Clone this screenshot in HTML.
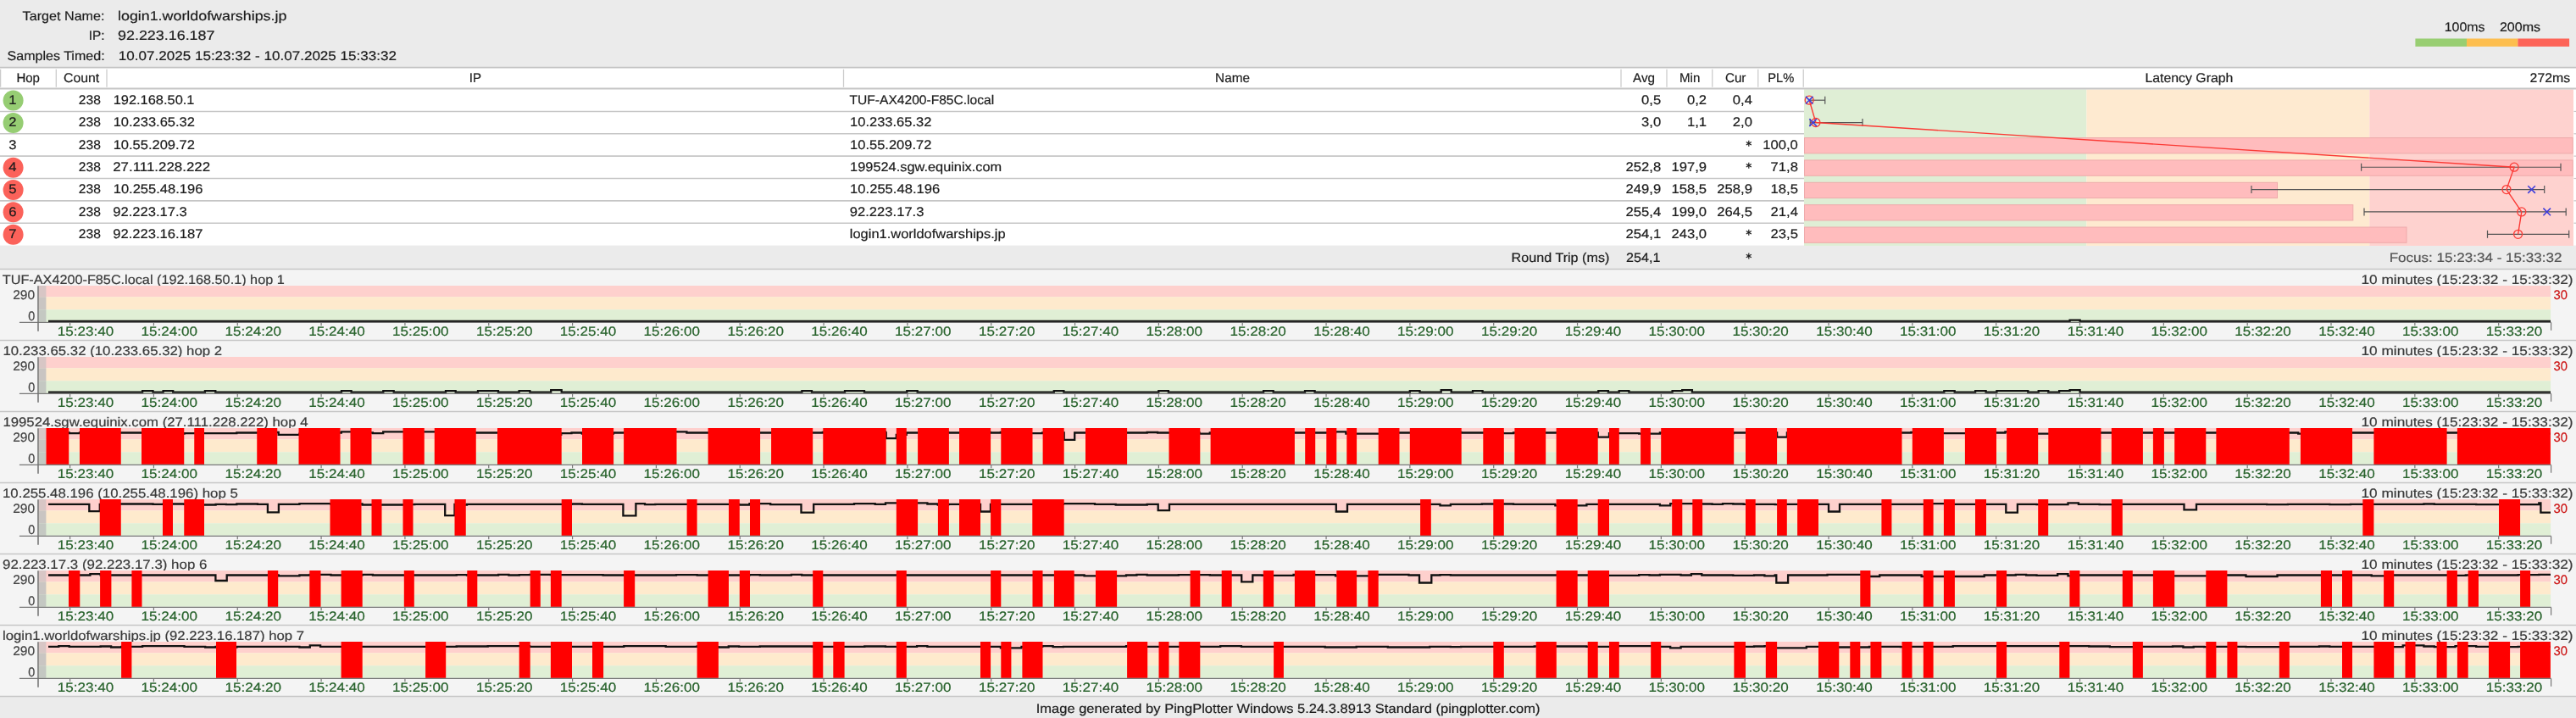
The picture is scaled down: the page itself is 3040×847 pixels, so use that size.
<!DOCTYPE html>
<html><head><meta charset="utf-8"><title>PingPlotter</title>
<style>
html,body{margin:0;padding:0;background:#ebebeb;}
body{width:3040px;height:847px;overflow:hidden;}
svg{display:block;will-change:transform;font-family:"Liberation Sans",sans-serif;}
text{white-space:pre;stroke-width:0.2px;text-rendering:geometricPrecision;}
</style></head><body>
<svg width="3040" height="847" viewBox="0 0 3040 847">
<rect x="0.00" y="0.00" width="3040.00" height="847.00" fill="#ebebeb" />
<text x="26.60" y="24.00" fill="#1c1c1c" stroke="#1c1c1c" font-size="15.3" textLength="96.96" lengthAdjust="spacingAndGlyphs">Target Name:</text>
<text x="104.80" y="47.00" fill="#1c1c1c" stroke="#1c1c1c" font-size="15.3" textLength="18.76" lengthAdjust="spacingAndGlyphs">IP:</text>
<text x="8.60" y="71.00" fill="#1c1c1c" stroke="#1c1c1c" font-size="15.3" textLength="114.99" lengthAdjust="spacingAndGlyphs">Samples Timed:</text>
<text x="139.00" y="24.00" fill="#1c1c1c" stroke="#1c1c1c" font-size="15.6" textLength="199.36" lengthAdjust="spacingAndGlyphs">login1.worldofwarships.jp</text>
<text x="139.00" y="47.00" fill="#1c1c1c" stroke="#1c1c1c" font-size="15.6" textLength="114.50" lengthAdjust="spacingAndGlyphs">92.223.16.187</text>
<text x="139.80" y="71.00" fill="#1c1c1c" stroke="#1c1c1c" font-size="15.3" textLength="328.19" lengthAdjust="spacingAndGlyphs">10.07.2025 15:23:32 - 10.07.2025 15:33:32</text>
<rect x="2850.40" y="45.50" width="60.60" height="9.40" fill="#98ce72" />
<rect x="2911.00" y="45.50" width="60.40" height="9.40" fill="#fdbe4f" />
<rect x="2971.40" y="45.50" width="60.70" height="9.40" fill="#fd6458" />
<text x="2884.70" y="37.00" fill="#1c1c1c" stroke="#1c1c1c" font-size="15.3" textLength="47.92" lengthAdjust="spacingAndGlyphs">100ms</text>
<text x="2949.90" y="37.00" fill="#1c1c1c" stroke="#1c1c1c" font-size="15.3" textLength="48.23" lengthAdjust="spacingAndGlyphs">200ms</text>
<rect x="0.00" y="80.00" width="3040.00" height="209.55" fill="#ffffff" />
<rect x="2129.00" y="105.40" width="333.40" height="184.55" fill="#dfeed5" />
<rect x="2462.40" y="105.40" width="333.90" height="184.55" fill="#feead0" />
<rect x="2796.30" y="105.40" width="240.70" height="184.55" fill="#fed2cf" />
<line x1="0.00" y1="79.60" x2="3040.00" y2="79.60" stroke="#c2c2c2" stroke-width="1.6" />
<line x1="0.00" y1="104.50" x2="3040.00" y2="104.50" stroke="#c6c6c6" stroke-width="1.8" />
<line x1="0.00" y1="131.45" x2="2129.00" y2="131.45" stroke="#c6c6c6" stroke-width="1.6" />
<line x1="3037.50" y1="131.45" x2="3040.00" y2="131.45" stroke="#c6c6c6" stroke-width="1.2" />
<line x1="0.00" y1="157.80" x2="2129.00" y2="157.80" stroke="#c6c6c6" stroke-width="1.6" />
<line x1="3037.50" y1="157.80" x2="3040.00" y2="157.80" stroke="#c6c6c6" stroke-width="1.2" />
<line x1="0.00" y1="184.15" x2="2129.00" y2="184.15" stroke="#c6c6c6" stroke-width="1.6" />
<line x1="3037.50" y1="184.15" x2="3040.00" y2="184.15" stroke="#c6c6c6" stroke-width="1.2" />
<line x1="0.00" y1="210.50" x2="2129.00" y2="210.50" stroke="#c6c6c6" stroke-width="1.6" />
<line x1="3037.50" y1="210.50" x2="3040.00" y2="210.50" stroke="#c6c6c6" stroke-width="1.2" />
<line x1="0.00" y1="236.85" x2="2129.00" y2="236.85" stroke="#c6c6c6" stroke-width="1.6" />
<line x1="3037.50" y1="236.85" x2="3040.00" y2="236.85" stroke="#c6c6c6" stroke-width="1.2" />
<line x1="0.00" y1="263.20" x2="2129.00" y2="263.20" stroke="#c6c6c6" stroke-width="1.6" />
<line x1="3037.50" y1="263.20" x2="3040.00" y2="263.20" stroke="#c6c6c6" stroke-width="1.2" />
<line x1="0.60" y1="81.80" x2="0.60" y2="102.80" stroke="#cccccc" stroke-width="1.3" />
<line x1="66.30" y1="81.80" x2="66.30" y2="102.80" stroke="#cccccc" stroke-width="1.3" />
<line x1="126.00" y1="81.80" x2="126.00" y2="102.80" stroke="#cccccc" stroke-width="1.3" />
<line x1="995.50" y1="81.80" x2="995.50" y2="102.80" stroke="#cccccc" stroke-width="1.3" />
<line x1="1913.00" y1="81.80" x2="1913.00" y2="102.80" stroke="#cccccc" stroke-width="1.3" />
<line x1="1967.00" y1="81.80" x2="1967.00" y2="102.80" stroke="#cccccc" stroke-width="1.3" />
<line x1="2020.75" y1="81.80" x2="2020.75" y2="102.80" stroke="#cccccc" stroke-width="1.3" />
<line x1="2074.75" y1="81.80" x2="2074.75" y2="102.80" stroke="#cccccc" stroke-width="1.3" />
<line x1="2128.25" y1="81.80" x2="2128.25" y2="102.80" stroke="#cccccc" stroke-width="1.3" />
<text x="19.40" y="97.00" fill="#1c1c1c" stroke="#1c1c1c" font-size="15.3" textLength="27.49" lengthAdjust="spacingAndGlyphs">Hop</text>
<text x="75.00" y="97.00" fill="#1c1c1c" stroke="#1c1c1c" font-size="15.3" textLength="42.23" lengthAdjust="spacingAndGlyphs">Count</text>
<text x="553.80" y="97.00" fill="#1c1c1c" stroke="#1c1c1c" font-size="15.3" textLength="14.20" lengthAdjust="spacingAndGlyphs">IP</text>
<text x="1434.10" y="97.00" fill="#1c1c1c" stroke="#1c1c1c" font-size="15.3" textLength="40.86" lengthAdjust="spacingAndGlyphs">Name</text>
<text x="1927.10" y="97.00" fill="#1c1c1c" stroke="#1c1c1c" font-size="15.3" textLength="26.00" lengthAdjust="spacingAndGlyphs">Avg</text>
<text x="1982.00" y="97.00" fill="#1c1c1c" stroke="#1c1c1c" font-size="15.3" textLength="24.32" lengthAdjust="spacingAndGlyphs">Min</text>
<text x="2035.90" y="97.00" fill="#1c1c1c" stroke="#1c1c1c" font-size="15.3" textLength="24.52" lengthAdjust="spacingAndGlyphs">Cur</text>
<text x="2086.30" y="97.00" fill="#1c1c1c" stroke="#1c1c1c" font-size="15.3" textLength="31.03" lengthAdjust="spacingAndGlyphs">PL%</text>
<text x="2531.40" y="97.00" fill="#1c1c1c" stroke="#1c1c1c" font-size="15.3" textLength="104.00" lengthAdjust="spacingAndGlyphs">Latency Graph</text>
<text x="2985.60" y="97.00" fill="#1c1c1c" stroke="#1c1c1c" font-size="15.3" textLength="47.62" lengthAdjust="spacingAndGlyphs">272ms</text>
<circle cx="15.6" cy="118.60" r="12.0" fill="#96cd73"/>
<text x="10.38" y="123.00" fill="#1c1c1c" stroke="#1c1c1c" font-size="15.3" textLength="9.26" lengthAdjust="spacingAndGlyphs">1</text>
<text x="92.80" y="123.00" fill="#1c1c1c" stroke="#1c1c1c" font-size="15.3" textLength="26.08" lengthAdjust="spacingAndGlyphs">238</text>
<text x="133.70" y="123.00" fill="#1c1c1c" stroke="#1c1c1c" font-size="15.3" textLength="95.78" lengthAdjust="spacingAndGlyphs">192.168.50.1</text>
<text x="1002.50" y="123.00" fill="#1c1c1c" stroke="#1c1c1c" font-size="15.3" textLength="170.68" lengthAdjust="spacingAndGlyphs">TUF-AX4200-F85C.local</text>
<text x="1937.07" y="123.00" fill="#1c1c1c" stroke="#1c1c1c" font-size="15.3" textLength="23.14" lengthAdjust="spacingAndGlyphs">0,5</text>
<text x="1990.97" y="123.00" fill="#1c1c1c" stroke="#1c1c1c" font-size="15.3" textLength="23.14" lengthAdjust="spacingAndGlyphs">0,2</text>
<text x="2044.87" y="123.00" fill="#1c1c1c" stroke="#1c1c1c" font-size="15.3" textLength="23.14" lengthAdjust="spacingAndGlyphs">0,4</text>
<circle cx="15.6" cy="144.95" r="12.0" fill="#96cd73"/>
<text x="10.38" y="149.00" fill="#1c1c1c" stroke="#1c1c1c" font-size="15.3" textLength="9.26" lengthAdjust="spacingAndGlyphs">2</text>
<text x="92.80" y="149.00" fill="#1c1c1c" stroke="#1c1c1c" font-size="15.3" textLength="26.08" lengthAdjust="spacingAndGlyphs">238</text>
<text x="133.70" y="149.00" fill="#1c1c1c" stroke="#1c1c1c" font-size="15.3" textLength="96.28" lengthAdjust="spacingAndGlyphs">10.233.65.32</text>
<text x="1003.00" y="149.00" fill="#1c1c1c" stroke="#1c1c1c" font-size="15.3" textLength="96.48" lengthAdjust="spacingAndGlyphs">10.233.65.32</text>
<text x="1937.07" y="149.00" fill="#1c1c1c" stroke="#1c1c1c" font-size="15.3" textLength="23.14" lengthAdjust="spacingAndGlyphs">3,0</text>
<text x="1990.97" y="149.00" fill="#1c1c1c" stroke="#1c1c1c" font-size="15.3" textLength="23.14" lengthAdjust="spacingAndGlyphs">1,1</text>
<text x="2044.87" y="149.00" fill="#1c1c1c" stroke="#1c1c1c" font-size="15.3" textLength="23.14" lengthAdjust="spacingAndGlyphs">2,0</text>
<text x="10.38" y="176.00" fill="#1c1c1c" stroke="#1c1c1c" font-size="15.3" textLength="9.26" lengthAdjust="spacingAndGlyphs">3</text>
<text x="92.80" y="176.00" fill="#1c1c1c" stroke="#1c1c1c" font-size="15.3" textLength="26.08" lengthAdjust="spacingAndGlyphs">238</text>
<text x="133.70" y="176.00" fill="#1c1c1c" stroke="#1c1c1c" font-size="15.3" textLength="96.28" lengthAdjust="spacingAndGlyphs">10.55.209.72</text>
<text x="1003.00" y="176.00" fill="#1c1c1c" stroke="#1c1c1c" font-size="15.3" textLength="96.48" lengthAdjust="spacingAndGlyphs">10.55.209.72</text>
<line x1="2063.80" y1="165.80" x2="2063.80" y2="172.80" stroke="#1c1c1c" stroke-width="1.15" />
<line x1="2060.77" y1="167.55" x2="2066.83" y2="171.05" stroke="#1c1c1c" stroke-width="1.15" />
<line x1="2066.83" y1="167.55" x2="2060.77" y2="171.05" stroke="#1c1c1c" stroke-width="1.15" />
<text x="2080.21" y="176.00" fill="#1c1c1c" stroke="#1c1c1c" font-size="15.3" textLength="41.64" lengthAdjust="spacingAndGlyphs">100,0</text>
<circle cx="15.6" cy="197.65" r="12.0" fill="#fb625a"/>
<text x="10.38" y="202.00" fill="#1c1c1c" stroke="#1c1c1c" font-size="15.3" textLength="9.26" lengthAdjust="spacingAndGlyphs">4</text>
<text x="92.80" y="202.00" fill="#1c1c1c" stroke="#1c1c1c" font-size="15.3" textLength="26.08" lengthAdjust="spacingAndGlyphs">238</text>
<text x="133.20" y="202.00" fill="#1c1c1c" stroke="#1c1c1c" font-size="15.3" textLength="114.96" lengthAdjust="spacingAndGlyphs">27.111.228.222</text>
<text x="1003.10" y="202.00" fill="#1c1c1c" stroke="#1c1c1c" font-size="15.3" textLength="179.13" lengthAdjust="spacingAndGlyphs">199524.sgw.equinix.com</text>
<text x="1918.51" y="202.00" fill="#1c1c1c" stroke="#1c1c1c" font-size="15.3" textLength="41.64" lengthAdjust="spacingAndGlyphs">252,8</text>
<text x="1972.41" y="202.00" fill="#1c1c1c" stroke="#1c1c1c" font-size="15.3" textLength="41.64" lengthAdjust="spacingAndGlyphs">197,9</text>
<line x1="2063.80" y1="191.80" x2="2063.80" y2="198.80" stroke="#1c1c1c" stroke-width="1.15" />
<line x1="2060.77" y1="193.55" x2="2066.83" y2="197.05" stroke="#1c1c1c" stroke-width="1.15" />
<line x1="2066.83" y1="193.55" x2="2060.77" y2="197.05" stroke="#1c1c1c" stroke-width="1.15" />
<text x="2089.53" y="202.00" fill="#1c1c1c" stroke="#1c1c1c" font-size="15.3" textLength="32.40" lengthAdjust="spacingAndGlyphs">71,8</text>
<circle cx="15.6" cy="224.00" r="12.0" fill="#fb625a"/>
<text x="10.38" y="228.00" fill="#1c1c1c" stroke="#1c1c1c" font-size="15.3" textLength="9.26" lengthAdjust="spacingAndGlyphs">5</text>
<text x="92.80" y="228.00" fill="#1c1c1c" stroke="#1c1c1c" font-size="15.3" textLength="26.08" lengthAdjust="spacingAndGlyphs">238</text>
<text x="133.70" y="228.00" fill="#1c1c1c" stroke="#1c1c1c" font-size="15.3" textLength="105.70" lengthAdjust="spacingAndGlyphs">10.255.48.196</text>
<text x="1003.10" y="228.00" fill="#1c1c1c" stroke="#1c1c1c" font-size="15.3" textLength="106.10" lengthAdjust="spacingAndGlyphs">10.255.48.196</text>
<text x="1918.51" y="228.00" fill="#1c1c1c" stroke="#1c1c1c" font-size="15.3" textLength="41.64" lengthAdjust="spacingAndGlyphs">249,9</text>
<text x="1972.41" y="228.00" fill="#1c1c1c" stroke="#1c1c1c" font-size="15.3" textLength="41.64" lengthAdjust="spacingAndGlyphs">158,5</text>
<text x="2026.31" y="228.00" fill="#1c1c1c" stroke="#1c1c1c" font-size="15.3" textLength="41.64" lengthAdjust="spacingAndGlyphs">258,9</text>
<text x="2089.53" y="228.00" fill="#1c1c1c" stroke="#1c1c1c" font-size="15.3" textLength="32.40" lengthAdjust="spacingAndGlyphs">18,5</text>
<circle cx="15.6" cy="250.35" r="12.0" fill="#fb625a"/>
<text x="10.38" y="255.00" fill="#1c1c1c" stroke="#1c1c1c" font-size="15.3" textLength="9.26" lengthAdjust="spacingAndGlyphs">6</text>
<text x="92.80" y="255.00" fill="#1c1c1c" stroke="#1c1c1c" font-size="15.3" textLength="26.08" lengthAdjust="spacingAndGlyphs">238</text>
<text x="133.20" y="255.00" fill="#1c1c1c" stroke="#1c1c1c" font-size="15.3" textLength="87.66" lengthAdjust="spacingAndGlyphs">92.223.17.3</text>
<text x="1002.80" y="255.00" fill="#1c1c1c" stroke="#1c1c1c" font-size="15.3" textLength="87.66" lengthAdjust="spacingAndGlyphs">92.223.17.3</text>
<text x="1918.51" y="255.00" fill="#1c1c1c" stroke="#1c1c1c" font-size="15.3" textLength="41.64" lengthAdjust="spacingAndGlyphs">255,4</text>
<text x="1972.41" y="255.00" fill="#1c1c1c" stroke="#1c1c1c" font-size="15.3" textLength="41.64" lengthAdjust="spacingAndGlyphs">199,0</text>
<text x="2026.31" y="255.00" fill="#1c1c1c" stroke="#1c1c1c" font-size="15.3" textLength="41.64" lengthAdjust="spacingAndGlyphs">264,5</text>
<text x="2089.53" y="255.00" fill="#1c1c1c" stroke="#1c1c1c" font-size="15.3" textLength="32.40" lengthAdjust="spacingAndGlyphs">21,4</text>
<circle cx="15.6" cy="276.70" r="12.0" fill="#fb625a"/>
<text x="10.38" y="281.00" fill="#1c1c1c" stroke="#1c1c1c" font-size="15.3" textLength="9.26" lengthAdjust="spacingAndGlyphs">7</text>
<text x="92.80" y="281.00" fill="#1c1c1c" stroke="#1c1c1c" font-size="15.3" textLength="26.08" lengthAdjust="spacingAndGlyphs">238</text>
<text x="133.20" y="281.00" fill="#1c1c1c" stroke="#1c1c1c" font-size="15.3" textLength="106.20" lengthAdjust="spacingAndGlyphs">92.223.16.187</text>
<text x="1002.80" y="281.00" fill="#1c1c1c" stroke="#1c1c1c" font-size="15.3" textLength="183.76" lengthAdjust="spacingAndGlyphs">login1.worldofwarships.jp</text>
<text x="1918.51" y="281.00" fill="#1c1c1c" stroke="#1c1c1c" font-size="15.3" textLength="41.64" lengthAdjust="spacingAndGlyphs">254,1</text>
<text x="1972.41" y="281.00" fill="#1c1c1c" stroke="#1c1c1c" font-size="15.3" textLength="41.64" lengthAdjust="spacingAndGlyphs">243,0</text>
<line x1="2063.80" y1="270.80" x2="2063.80" y2="277.80" stroke="#1c1c1c" stroke-width="1.15" />
<line x1="2060.77" y1="272.55" x2="2066.83" y2="276.05" stroke="#1c1c1c" stroke-width="1.15" />
<line x1="2066.83" y1="272.55" x2="2060.77" y2="276.05" stroke="#1c1c1c" stroke-width="1.15" />
<text x="2089.53" y="281.00" fill="#1c1c1c" stroke="#1c1c1c" font-size="15.3" textLength="32.40" lengthAdjust="spacingAndGlyphs">23,5</text>
<rect x="2129.50" y="162.60" width="906.60" height="18.3" fill="#ffbcbd" stroke="#eeaaab" stroke-width="1"/>
<rect x="2129.50" y="188.95" width="906.60" height="18.3" fill="#ffbcbd" stroke="#eeaaab" stroke-width="1"/>
<rect x="2129.50" y="215.30" width="558.00" height="18.3" fill="#ffbcbd" stroke="#eeaaab" stroke-width="1"/>
<rect x="2129.50" y="241.65" width="647.30" height="18.3" fill="#ffbcbd" stroke="#eeaaab" stroke-width="1"/>
<rect x="2129.50" y="268.00" width="710.50" height="18.3" fill="#ffbcbd" stroke="#eeaaab" stroke-width="1"/>
<line x1="2135.00" y1="118.20" x2="2153.75" y2="118.20" stroke="#555555" stroke-width="1.2" />
<line x1="2153.75" y1="113.70" x2="2153.75" y2="122.70" stroke="#555555" stroke-width="1.2" />
<line x1="2136.25" y1="144.55" x2="2198.00" y2="144.55" stroke="#555555" stroke-width="1.2" />
<line x1="2136.25" y1="140.05" x2="2136.25" y2="149.05" stroke="#555555" stroke-width="1.2" />
<line x1="2198.00" y1="140.05" x2="2198.00" y2="149.05" stroke="#555555" stroke-width="1.2" />
<line x1="2786.60" y1="197.25" x2="3022.00" y2="197.25" stroke="#555555" stroke-width="1.2" />
<line x1="2786.60" y1="192.75" x2="2786.60" y2="201.75" stroke="#555555" stroke-width="1.2" />
<line x1="3022.00" y1="192.75" x2="3022.00" y2="201.75" stroke="#555555" stroke-width="1.2" />
<line x1="2657.00" y1="223.60" x2="3002.70" y2="223.60" stroke="#555555" stroke-width="1.2" />
<line x1="2657.00" y1="219.10" x2="2657.00" y2="228.10" stroke="#555555" stroke-width="1.2" />
<line x1="3002.70" y1="219.10" x2="3002.70" y2="228.10" stroke="#555555" stroke-width="1.2" />
<line x1="2790.00" y1="249.95" x2="3028.20" y2="249.95" stroke="#555555" stroke-width="1.2" />
<line x1="2790.00" y1="245.45" x2="2790.00" y2="254.45" stroke="#555555" stroke-width="1.2" />
<line x1="3028.20" y1="245.45" x2="3028.20" y2="254.45" stroke="#555555" stroke-width="1.2" />
<line x1="2935.50" y1="276.30" x2="3031.70" y2="276.30" stroke="#555555" stroke-width="1.2" />
<line x1="2935.50" y1="271.80" x2="2935.50" y2="280.80" stroke="#555555" stroke-width="1.2" />
<line x1="3031.70" y1="271.80" x2="3031.70" y2="280.80" stroke="#555555" stroke-width="1.2" />
<polyline points="2135.2,118.2 2142.9,144.5 2967.1,197.2 2958.0,223.6 2975.8,249.9 2971.6,276.3" fill="none" stroke="#fb3a35" stroke-width="1.4"/>
<circle cx="2135.2" cy="118.2" r="5" fill="none" stroke="#fb3a35" stroke-width="1.3"/>
<circle cx="2142.9" cy="144.5" r="5" fill="none" stroke="#fb3a35" stroke-width="1.3"/>
<circle cx="2967.1" cy="197.2" r="5" fill="none" stroke="#fb3a35" stroke-width="1.3"/>
<circle cx="2958.0" cy="223.6" r="5" fill="none" stroke="#fb3a35" stroke-width="1.3"/>
<circle cx="2975.8" cy="249.9" r="5" fill="none" stroke="#fb3a35" stroke-width="1.3"/>
<circle cx="2971.6" cy="276.3" r="5" fill="none" stroke="#fb3a35" stroke-width="1.3"/>
<line x1="2130.90" y1="113.90" x2="2139.50" y2="122.50" stroke="#3b3bdc" stroke-width="1.5" />
<line x1="2130.90" y1="122.50" x2="2139.50" y2="113.90" stroke="#3b3bdc" stroke-width="1.5" />
<line x1="2135.30" y1="140.25" x2="2143.90" y2="148.85" stroke="#3b3bdc" stroke-width="1.5" />
<line x1="2135.30" y1="148.85" x2="2143.90" y2="140.25" stroke="#3b3bdc" stroke-width="1.5" />
<line x1="2983.30" y1="219.30" x2="2991.90" y2="227.90" stroke="#3b3bdc" stroke-width="1.5" />
<line x1="2983.30" y1="227.90" x2="2991.90" y2="219.30" stroke="#3b3bdc" stroke-width="1.5" />
<line x1="3001.40" y1="245.65" x2="3010.00" y2="254.25" stroke="#3b3bdc" stroke-width="1.5" />
<line x1="3001.40" y1="254.25" x2="3010.00" y2="245.65" stroke="#3b3bdc" stroke-width="1.5" />
<text x="1783.60" y="309.00" fill="#1c1c1c" stroke="#1c1c1c" font-size="15.3" textLength="115.78" lengthAdjust="spacingAndGlyphs">Round Trip (ms)</text>
<text x="1919.00" y="309.00" fill="#1c1c1c" stroke="#1c1c1c" font-size="15.3" textLength="40.36" lengthAdjust="spacingAndGlyphs">254,1</text>
<line x1="2063.80" y1="298.50" x2="2063.80" y2="305.50" stroke="#1c1c1c" stroke-width="1.15" />
<line x1="2060.77" y1="300.25" x2="2066.83" y2="303.75" stroke="#1c1c1c" stroke-width="1.15" />
<line x1="2066.83" y1="300.25" x2="2060.77" y2="303.75" stroke="#1c1c1c" stroke-width="1.15" />
<text x="2819.70" y="309.00" fill="#555555" stroke="#555555" font-size="15.3" textLength="203.76" lengthAdjust="spacingAndGlyphs">Focus: 15:23:34 - 15:33:32</text>
<rect x="0.00" y="317.50" width="3040.00" height="504.00" fill="#f4f4f4" />
<line x1="0.00" y1="317.50" x2="3040.00" y2="317.50" stroke="#c6c6c6" stroke-width="1.3" />
<text x="2.80" y="335.00" fill="#3a3a3a" stroke="#3a3a3a" font-size="15.3" textLength="332.93" lengthAdjust="spacingAndGlyphs">TUF-AX4200-F85C.local (192.168.50.1) hop 1</text>
<text x="2786.50" y="335.00" fill="#3a3a3a" stroke="#3a3a3a" font-size="15.3" textLength="250.09" lengthAdjust="spacingAndGlyphs">10 minutes (15:23:32 - 15:33:32)</text>
<rect x="45.60" y="337.00" width="2964.50" height="13.30" fill="#fed0cd" />
<rect x="45.60" y="350.30" width="2964.50" height="15.00" fill="#feeacd" />
<rect x="45.60" y="365.30" width="2964.50" height="14.40" fill="#e0efd5" />
<rect x="45.80" y="337.00" width="8.60" height="13.30" fill="#d8c6c5" />
<rect x="45.80" y="350.30" width="8.60" height="15.00" fill="#c9c5c2" />
<rect x="45.80" y="365.30" width="8.60" height="14.40" fill="#c4c8c2" />
<text x="15.20" y="353.00" fill="#444444" stroke="#444444" font-size="15.3" textLength="25.98" lengthAdjust="spacingAndGlyphs">290</text>
<text x="33.20" y="378.00" fill="#444444" stroke="#444444" font-size="15.3" textLength="8.02" lengthAdjust="spacingAndGlyphs">0</text>
<text x="3013.60" y="353.00" fill="#cc1414" stroke="#cc1414" font-size="15.3" textLength="16.43" lengthAdjust="spacingAndGlyphs">30</text>
<polyline points="57.0,378.9 2442.6,378.9 2442.6,377.6 2454.6,377.6 2454.6,378.9 3010.0,378.9" fill="none" stroke="#111111" stroke-width="2.3"/>
<line x1="22.90" y1="380.40" x2="3010.70" y2="380.40" stroke="#777777" stroke-width="1.4" />
<line x1="45.00" y1="337.30" x2="45.00" y2="390.80" stroke="#707070" stroke-width="1.5" />
<line x1="3010.60" y1="380.40" x2="3010.60" y2="389.80" stroke="#777777" stroke-width="1.2" />
<line x1="82.60" y1="380.40" x2="82.60" y2="384.30" stroke="#777777" stroke-width="1.2" />
<text x="67.80" y="396.00" fill="#27622b" stroke="#27622b" stroke-width="0.1" font-size="15.3" textLength="66.46" lengthAdjust="spacingAndGlyphs">15:23:40</text>
<line x1="181.43" y1="380.40" x2="181.43" y2="384.30" stroke="#777777" stroke-width="1.2" />
<text x="166.63" y="396.00" fill="#27622b" stroke="#27622b" stroke-width="0.1" font-size="15.3" textLength="66.46" lengthAdjust="spacingAndGlyphs">15:24:00</text>
<line x1="280.26" y1="380.40" x2="280.26" y2="384.30" stroke="#777777" stroke-width="1.2" />
<text x="265.46" y="396.00" fill="#27622b" stroke="#27622b" stroke-width="0.1" font-size="15.3" textLength="66.46" lengthAdjust="spacingAndGlyphs">15:24:20</text>
<line x1="379.09" y1="380.40" x2="379.09" y2="384.30" stroke="#777777" stroke-width="1.2" />
<text x="364.29" y="396.00" fill="#27622b" stroke="#27622b" stroke-width="0.1" font-size="15.3" textLength="66.46" lengthAdjust="spacingAndGlyphs">15:24:40</text>
<line x1="477.92" y1="380.40" x2="477.92" y2="384.30" stroke="#777777" stroke-width="1.2" />
<text x="463.12" y="396.00" fill="#27622b" stroke="#27622b" stroke-width="0.1" font-size="15.3" textLength="66.46" lengthAdjust="spacingAndGlyphs">15:25:00</text>
<line x1="576.75" y1="380.40" x2="576.75" y2="384.30" stroke="#777777" stroke-width="1.2" />
<text x="561.95" y="396.00" fill="#27622b" stroke="#27622b" stroke-width="0.1" font-size="15.3" textLength="66.46" lengthAdjust="spacingAndGlyphs">15:25:20</text>
<line x1="675.58" y1="380.40" x2="675.58" y2="384.30" stroke="#777777" stroke-width="1.2" />
<text x="660.78" y="396.00" fill="#27622b" stroke="#27622b" stroke-width="0.1" font-size="15.3" textLength="66.46" lengthAdjust="spacingAndGlyphs">15:25:40</text>
<line x1="774.41" y1="380.40" x2="774.41" y2="384.30" stroke="#777777" stroke-width="1.2" />
<text x="759.61" y="396.00" fill="#27622b" stroke="#27622b" stroke-width="0.1" font-size="15.3" textLength="66.46" lengthAdjust="spacingAndGlyphs">15:26:00</text>
<line x1="873.24" y1="380.40" x2="873.24" y2="384.30" stroke="#777777" stroke-width="1.2" />
<text x="858.44" y="396.00" fill="#27622b" stroke="#27622b" stroke-width="0.1" font-size="15.3" textLength="66.46" lengthAdjust="spacingAndGlyphs">15:26:20</text>
<line x1="972.07" y1="380.40" x2="972.07" y2="384.30" stroke="#777777" stroke-width="1.2" />
<text x="957.27" y="396.00" fill="#27622b" stroke="#27622b" stroke-width="0.1" font-size="15.3" textLength="66.46" lengthAdjust="spacingAndGlyphs">15:26:40</text>
<line x1="1070.90" y1="380.40" x2="1070.90" y2="384.30" stroke="#777777" stroke-width="1.2" />
<text x="1056.10" y="396.00" fill="#27622b" stroke="#27622b" stroke-width="0.1" font-size="15.3" textLength="66.46" lengthAdjust="spacingAndGlyphs">15:27:00</text>
<line x1="1169.73" y1="380.40" x2="1169.73" y2="384.30" stroke="#777777" stroke-width="1.2" />
<text x="1154.93" y="396.00" fill="#27622b" stroke="#27622b" stroke-width="0.1" font-size="15.3" textLength="66.46" lengthAdjust="spacingAndGlyphs">15:27:20</text>
<line x1="1268.56" y1="380.40" x2="1268.56" y2="384.30" stroke="#777777" stroke-width="1.2" />
<text x="1253.76" y="396.00" fill="#27622b" stroke="#27622b" stroke-width="0.1" font-size="15.3" textLength="66.46" lengthAdjust="spacingAndGlyphs">15:27:40</text>
<line x1="1367.39" y1="380.40" x2="1367.39" y2="384.30" stroke="#777777" stroke-width="1.2" />
<text x="1352.59" y="396.00" fill="#27622b" stroke="#27622b" stroke-width="0.1" font-size="15.3" textLength="66.46" lengthAdjust="spacingAndGlyphs">15:28:00</text>
<line x1="1466.22" y1="380.40" x2="1466.22" y2="384.30" stroke="#777777" stroke-width="1.2" />
<text x="1451.42" y="396.00" fill="#27622b" stroke="#27622b" stroke-width="0.1" font-size="15.3" textLength="66.46" lengthAdjust="spacingAndGlyphs">15:28:20</text>
<line x1="1565.05" y1="380.40" x2="1565.05" y2="384.30" stroke="#777777" stroke-width="1.2" />
<text x="1550.25" y="396.00" fill="#27622b" stroke="#27622b" stroke-width="0.1" font-size="15.3" textLength="66.46" lengthAdjust="spacingAndGlyphs">15:28:40</text>
<line x1="1663.88" y1="380.40" x2="1663.88" y2="384.30" stroke="#777777" stroke-width="1.2" />
<text x="1649.08" y="396.00" fill="#27622b" stroke="#27622b" stroke-width="0.1" font-size="15.3" textLength="66.46" lengthAdjust="spacingAndGlyphs">15:29:00</text>
<line x1="1762.71" y1="380.40" x2="1762.71" y2="384.30" stroke="#777777" stroke-width="1.2" />
<text x="1747.91" y="396.00" fill="#27622b" stroke="#27622b" stroke-width="0.1" font-size="15.3" textLength="66.46" lengthAdjust="spacingAndGlyphs">15:29:20</text>
<line x1="1861.54" y1="380.40" x2="1861.54" y2="384.30" stroke="#777777" stroke-width="1.2" />
<text x="1846.74" y="396.00" fill="#27622b" stroke="#27622b" stroke-width="0.1" font-size="15.3" textLength="66.46" lengthAdjust="spacingAndGlyphs">15:29:40</text>
<line x1="1960.37" y1="380.40" x2="1960.37" y2="384.30" stroke="#777777" stroke-width="1.2" />
<text x="1945.57" y="396.00" fill="#27622b" stroke="#27622b" stroke-width="0.1" font-size="15.3" textLength="66.46" lengthAdjust="spacingAndGlyphs">15:30:00</text>
<line x1="2059.20" y1="380.40" x2="2059.20" y2="384.30" stroke="#777777" stroke-width="1.2" />
<text x="2044.40" y="396.00" fill="#27622b" stroke="#27622b" stroke-width="0.1" font-size="15.3" textLength="66.46" lengthAdjust="spacingAndGlyphs">15:30:20</text>
<line x1="2158.03" y1="380.40" x2="2158.03" y2="384.30" stroke="#777777" stroke-width="1.2" />
<text x="2143.23" y="396.00" fill="#27622b" stroke="#27622b" stroke-width="0.1" font-size="15.3" textLength="66.46" lengthAdjust="spacingAndGlyphs">15:30:40</text>
<line x1="2256.86" y1="380.40" x2="2256.86" y2="384.30" stroke="#777777" stroke-width="1.2" />
<text x="2242.06" y="396.00" fill="#27622b" stroke="#27622b" stroke-width="0.1" font-size="15.3" textLength="66.46" lengthAdjust="spacingAndGlyphs">15:31:00</text>
<line x1="2355.69" y1="380.40" x2="2355.69" y2="384.30" stroke="#777777" stroke-width="1.2" />
<text x="2340.89" y="396.00" fill="#27622b" stroke="#27622b" stroke-width="0.1" font-size="15.3" textLength="66.46" lengthAdjust="spacingAndGlyphs">15:31:20</text>
<line x1="2454.52" y1="380.40" x2="2454.52" y2="384.30" stroke="#777777" stroke-width="1.2" />
<text x="2439.72" y="396.00" fill="#27622b" stroke="#27622b" stroke-width="0.1" font-size="15.3" textLength="66.46" lengthAdjust="spacingAndGlyphs">15:31:40</text>
<line x1="2553.35" y1="380.40" x2="2553.35" y2="384.30" stroke="#777777" stroke-width="1.2" />
<text x="2538.55" y="396.00" fill="#27622b" stroke="#27622b" stroke-width="0.1" font-size="15.3" textLength="66.46" lengthAdjust="spacingAndGlyphs">15:32:00</text>
<line x1="2652.18" y1="380.40" x2="2652.18" y2="384.30" stroke="#777777" stroke-width="1.2" />
<text x="2637.38" y="396.00" fill="#27622b" stroke="#27622b" stroke-width="0.1" font-size="15.3" textLength="66.46" lengthAdjust="spacingAndGlyphs">15:32:20</text>
<line x1="2751.01" y1="380.40" x2="2751.01" y2="384.30" stroke="#777777" stroke-width="1.2" />
<text x="2736.21" y="396.00" fill="#27622b" stroke="#27622b" stroke-width="0.1" font-size="15.3" textLength="66.46" lengthAdjust="spacingAndGlyphs">15:32:40</text>
<line x1="2849.84" y1="380.40" x2="2849.84" y2="384.30" stroke="#777777" stroke-width="1.2" />
<text x="2835.04" y="396.00" fill="#27622b" stroke="#27622b" stroke-width="0.1" font-size="15.3" textLength="66.46" lengthAdjust="spacingAndGlyphs">15:33:00</text>
<line x1="2948.67" y1="380.40" x2="2948.67" y2="384.30" stroke="#777777" stroke-width="1.2" />
<text x="2933.87" y="396.00" fill="#27622b" stroke="#27622b" stroke-width="0.1" font-size="15.3" textLength="66.46" lengthAdjust="spacingAndGlyphs">15:33:20</text>
<line x1="0.00" y1="401.50" x2="3040.00" y2="401.50" stroke="#c6c6c6" stroke-width="1.3" />
<text x="3.40" y="419.00" fill="#3a3a3a" stroke="#3a3a3a" font-size="15.3" textLength="258.74" lengthAdjust="spacingAndGlyphs">10.233.65.32 (10.233.65.32) hop 2</text>
<text x="2786.50" y="419.00" fill="#3a3a3a" stroke="#3a3a3a" font-size="15.3" textLength="250.09" lengthAdjust="spacingAndGlyphs">10 minutes (15:23:32 - 15:33:32)</text>
<rect x="45.60" y="421.00" width="2964.50" height="13.30" fill="#fed0cd" />
<rect x="45.60" y="434.30" width="2964.50" height="15.00" fill="#feeacd" />
<rect x="45.60" y="449.30" width="2964.50" height="14.40" fill="#e0efd5" />
<rect x="45.80" y="421.00" width="8.60" height="13.30" fill="#d8c6c5" />
<rect x="45.80" y="434.30" width="8.60" height="15.00" fill="#c9c5c2" />
<rect x="45.80" y="449.30" width="8.60" height="14.40" fill="#c4c8c2" />
<text x="15.20" y="437.00" fill="#444444" stroke="#444444" font-size="15.3" textLength="25.98" lengthAdjust="spacingAndGlyphs">290</text>
<text x="33.20" y="462.00" fill="#444444" stroke="#444444" font-size="15.3" textLength="8.02" lengthAdjust="spacingAndGlyphs">0</text>
<text x="3013.60" y="437.00" fill="#cc1414" stroke="#cc1414" font-size="15.3" textLength="16.43" lengthAdjust="spacingAndGlyphs">30</text>
<polyline points="57.0,462.6 168.1,462.6 168.1,461.2 180.5,461.2 180.5,462.6 192.6,462.6 192.6,461.2 204.2,461.2 204.2,462.6 241.9,462.6 241.9,461.2 254.3,461.2 254.3,462.6 403.0,462.6 403.0,461.2 414.6,461.2 414.6,462.6 452.3,462.6 452.3,461.2 464.7,461.2 464.7,462.6 526.0,462.6 526.0,461.2 537.7,461.2 537.7,462.6 564.0,462.6 564.0,461.2 588.0,461.2 588.0,462.6 612.6,462.6 612.6,461.2 625.4,461.2 625.4,462.6 650.2,462.6 650.2,460.2 662.7,460.2 662.7,462.6 946.4,462.6 946.4,461.2 958.0,461.2 958.0,462.6 997.0,462.6 997.0,461.2 1020.0,461.2 1020.0,462.6 1070.3,462.6 1070.3,461.2 1082.7,461.2 1082.7,462.6 1243.8,462.6 1243.8,461.2 1255.4,461.2 1255.4,462.6 1367.3,462.6 1367.3,461.2 1378.9,461.2 1378.9,462.6 1491.1,462.6 1491.1,461.2 1502.7,461.2 1502.7,462.6 1540.0,462.6 1540.0,461.2 1551.6,461.2 1551.6,462.6 1663.8,462.6 1663.8,461.2 1675.5,461.2 1675.5,462.6 1700.7,462.6 1700.7,460.2 1712.7,460.2 1712.7,462.6 1738.0,462.6 1738.0,461.2 1749.6,461.2 1749.6,462.6 1886.3,462.6 1886.3,461.2 1897.9,461.2 1897.9,462.6 1910.7,462.6 1910.7,461.2 1922.4,461.2 1922.4,462.6 1973.6,462.6 1973.6,461.2 1985.2,461.2 1985.2,460.2 1996.9,460.2 1996.9,462.6 2294.3,462.6 2294.3,461.2 2306.7,461.2 2306.7,462.6 2331.1,462.6 2331.1,461.2 2343.6,461.2 2343.6,462.6 2356.4,462.6 2356.4,461.2 2393.3,461.2 2393.3,462.6 2405.7,462.6 2405.7,461.2 2417.3,461.2 2417.3,462.6 2430.1,462.6 2430.1,461.2 2442.6,461.2 2442.6,460.2 2454.6,460.2 2454.6,462.6 3010.0,462.6" fill="none" stroke="#111111" stroke-width="2.3"/>
<line x1="22.90" y1="464.40" x2="3010.70" y2="464.40" stroke="#777777" stroke-width="1.4" />
<line x1="45.00" y1="421.30" x2="45.00" y2="474.80" stroke="#707070" stroke-width="1.5" />
<line x1="3010.60" y1="464.40" x2="3010.60" y2="473.80" stroke="#777777" stroke-width="1.2" />
<line x1="82.60" y1="464.40" x2="82.60" y2="468.30" stroke="#777777" stroke-width="1.2" />
<text x="67.80" y="480.00" fill="#27622b" stroke="#27622b" stroke-width="0.1" font-size="15.3" textLength="66.46" lengthAdjust="spacingAndGlyphs">15:23:40</text>
<line x1="181.43" y1="464.40" x2="181.43" y2="468.30" stroke="#777777" stroke-width="1.2" />
<text x="166.63" y="480.00" fill="#27622b" stroke="#27622b" stroke-width="0.1" font-size="15.3" textLength="66.46" lengthAdjust="spacingAndGlyphs">15:24:00</text>
<line x1="280.26" y1="464.40" x2="280.26" y2="468.30" stroke="#777777" stroke-width="1.2" />
<text x="265.46" y="480.00" fill="#27622b" stroke="#27622b" stroke-width="0.1" font-size="15.3" textLength="66.46" lengthAdjust="spacingAndGlyphs">15:24:20</text>
<line x1="379.09" y1="464.40" x2="379.09" y2="468.30" stroke="#777777" stroke-width="1.2" />
<text x="364.29" y="480.00" fill="#27622b" stroke="#27622b" stroke-width="0.1" font-size="15.3" textLength="66.46" lengthAdjust="spacingAndGlyphs">15:24:40</text>
<line x1="477.92" y1="464.40" x2="477.92" y2="468.30" stroke="#777777" stroke-width="1.2" />
<text x="463.12" y="480.00" fill="#27622b" stroke="#27622b" stroke-width="0.1" font-size="15.3" textLength="66.46" lengthAdjust="spacingAndGlyphs">15:25:00</text>
<line x1="576.75" y1="464.40" x2="576.75" y2="468.30" stroke="#777777" stroke-width="1.2" />
<text x="561.95" y="480.00" fill="#27622b" stroke="#27622b" stroke-width="0.1" font-size="15.3" textLength="66.46" lengthAdjust="spacingAndGlyphs">15:25:20</text>
<line x1="675.58" y1="464.40" x2="675.58" y2="468.30" stroke="#777777" stroke-width="1.2" />
<text x="660.78" y="480.00" fill="#27622b" stroke="#27622b" stroke-width="0.1" font-size="15.3" textLength="66.46" lengthAdjust="spacingAndGlyphs">15:25:40</text>
<line x1="774.41" y1="464.40" x2="774.41" y2="468.30" stroke="#777777" stroke-width="1.2" />
<text x="759.61" y="480.00" fill="#27622b" stroke="#27622b" stroke-width="0.1" font-size="15.3" textLength="66.46" lengthAdjust="spacingAndGlyphs">15:26:00</text>
<line x1="873.24" y1="464.40" x2="873.24" y2="468.30" stroke="#777777" stroke-width="1.2" />
<text x="858.44" y="480.00" fill="#27622b" stroke="#27622b" stroke-width="0.1" font-size="15.3" textLength="66.46" lengthAdjust="spacingAndGlyphs">15:26:20</text>
<line x1="972.07" y1="464.40" x2="972.07" y2="468.30" stroke="#777777" stroke-width="1.2" />
<text x="957.27" y="480.00" fill="#27622b" stroke="#27622b" stroke-width="0.1" font-size="15.3" textLength="66.46" lengthAdjust="spacingAndGlyphs">15:26:40</text>
<line x1="1070.90" y1="464.40" x2="1070.90" y2="468.30" stroke="#777777" stroke-width="1.2" />
<text x="1056.10" y="480.00" fill="#27622b" stroke="#27622b" stroke-width="0.1" font-size="15.3" textLength="66.46" lengthAdjust="spacingAndGlyphs">15:27:00</text>
<line x1="1169.73" y1="464.40" x2="1169.73" y2="468.30" stroke="#777777" stroke-width="1.2" />
<text x="1154.93" y="480.00" fill="#27622b" stroke="#27622b" stroke-width="0.1" font-size="15.3" textLength="66.46" lengthAdjust="spacingAndGlyphs">15:27:20</text>
<line x1="1268.56" y1="464.40" x2="1268.56" y2="468.30" stroke="#777777" stroke-width="1.2" />
<text x="1253.76" y="480.00" fill="#27622b" stroke="#27622b" stroke-width="0.1" font-size="15.3" textLength="66.46" lengthAdjust="spacingAndGlyphs">15:27:40</text>
<line x1="1367.39" y1="464.40" x2="1367.39" y2="468.30" stroke="#777777" stroke-width="1.2" />
<text x="1352.59" y="480.00" fill="#27622b" stroke="#27622b" stroke-width="0.1" font-size="15.3" textLength="66.46" lengthAdjust="spacingAndGlyphs">15:28:00</text>
<line x1="1466.22" y1="464.40" x2="1466.22" y2="468.30" stroke="#777777" stroke-width="1.2" />
<text x="1451.42" y="480.00" fill="#27622b" stroke="#27622b" stroke-width="0.1" font-size="15.3" textLength="66.46" lengthAdjust="spacingAndGlyphs">15:28:20</text>
<line x1="1565.05" y1="464.40" x2="1565.05" y2="468.30" stroke="#777777" stroke-width="1.2" />
<text x="1550.25" y="480.00" fill="#27622b" stroke="#27622b" stroke-width="0.1" font-size="15.3" textLength="66.46" lengthAdjust="spacingAndGlyphs">15:28:40</text>
<line x1="1663.88" y1="464.40" x2="1663.88" y2="468.30" stroke="#777777" stroke-width="1.2" />
<text x="1649.08" y="480.00" fill="#27622b" stroke="#27622b" stroke-width="0.1" font-size="15.3" textLength="66.46" lengthAdjust="spacingAndGlyphs">15:29:00</text>
<line x1="1762.71" y1="464.40" x2="1762.71" y2="468.30" stroke="#777777" stroke-width="1.2" />
<text x="1747.91" y="480.00" fill="#27622b" stroke="#27622b" stroke-width="0.1" font-size="15.3" textLength="66.46" lengthAdjust="spacingAndGlyphs">15:29:20</text>
<line x1="1861.54" y1="464.40" x2="1861.54" y2="468.30" stroke="#777777" stroke-width="1.2" />
<text x="1846.74" y="480.00" fill="#27622b" stroke="#27622b" stroke-width="0.1" font-size="15.3" textLength="66.46" lengthAdjust="spacingAndGlyphs">15:29:40</text>
<line x1="1960.37" y1="464.40" x2="1960.37" y2="468.30" stroke="#777777" stroke-width="1.2" />
<text x="1945.57" y="480.00" fill="#27622b" stroke="#27622b" stroke-width="0.1" font-size="15.3" textLength="66.46" lengthAdjust="spacingAndGlyphs">15:30:00</text>
<line x1="2059.20" y1="464.40" x2="2059.20" y2="468.30" stroke="#777777" stroke-width="1.2" />
<text x="2044.40" y="480.00" fill="#27622b" stroke="#27622b" stroke-width="0.1" font-size="15.3" textLength="66.46" lengthAdjust="spacingAndGlyphs">15:30:20</text>
<line x1="2158.03" y1="464.40" x2="2158.03" y2="468.30" stroke="#777777" stroke-width="1.2" />
<text x="2143.23" y="480.00" fill="#27622b" stroke="#27622b" stroke-width="0.1" font-size="15.3" textLength="66.46" lengthAdjust="spacingAndGlyphs">15:30:40</text>
<line x1="2256.86" y1="464.40" x2="2256.86" y2="468.30" stroke="#777777" stroke-width="1.2" />
<text x="2242.06" y="480.00" fill="#27622b" stroke="#27622b" stroke-width="0.1" font-size="15.3" textLength="66.46" lengthAdjust="spacingAndGlyphs">15:31:00</text>
<line x1="2355.69" y1="464.40" x2="2355.69" y2="468.30" stroke="#777777" stroke-width="1.2" />
<text x="2340.89" y="480.00" fill="#27622b" stroke="#27622b" stroke-width="0.1" font-size="15.3" textLength="66.46" lengthAdjust="spacingAndGlyphs">15:31:20</text>
<line x1="2454.52" y1="464.40" x2="2454.52" y2="468.30" stroke="#777777" stroke-width="1.2" />
<text x="2439.72" y="480.00" fill="#27622b" stroke="#27622b" stroke-width="0.1" font-size="15.3" textLength="66.46" lengthAdjust="spacingAndGlyphs">15:31:40</text>
<line x1="2553.35" y1="464.40" x2="2553.35" y2="468.30" stroke="#777777" stroke-width="1.2" />
<text x="2538.55" y="480.00" fill="#27622b" stroke="#27622b" stroke-width="0.1" font-size="15.3" textLength="66.46" lengthAdjust="spacingAndGlyphs">15:32:00</text>
<line x1="2652.18" y1="464.40" x2="2652.18" y2="468.30" stroke="#777777" stroke-width="1.2" />
<text x="2637.38" y="480.00" fill="#27622b" stroke="#27622b" stroke-width="0.1" font-size="15.3" textLength="66.46" lengthAdjust="spacingAndGlyphs">15:32:20</text>
<line x1="2751.01" y1="464.40" x2="2751.01" y2="468.30" stroke="#777777" stroke-width="1.2" />
<text x="2736.21" y="480.00" fill="#27622b" stroke="#27622b" stroke-width="0.1" font-size="15.3" textLength="66.46" lengthAdjust="spacingAndGlyphs">15:32:40</text>
<line x1="2849.84" y1="464.40" x2="2849.84" y2="468.30" stroke="#777777" stroke-width="1.2" />
<text x="2835.04" y="480.00" fill="#27622b" stroke="#27622b" stroke-width="0.1" font-size="15.3" textLength="66.46" lengthAdjust="spacingAndGlyphs">15:33:00</text>
<line x1="2948.67" y1="464.40" x2="2948.67" y2="468.30" stroke="#777777" stroke-width="1.2" />
<text x="2933.87" y="480.00" fill="#27622b" stroke="#27622b" stroke-width="0.1" font-size="15.3" textLength="66.46" lengthAdjust="spacingAndGlyphs">15:33:20</text>
<line x1="0.00" y1="485.50" x2="3040.00" y2="485.50" stroke="#c6c6c6" stroke-width="1.3" />
<text x="3.40" y="503.00" fill="#3a3a3a" stroke="#3a3a3a" font-size="15.3" textLength="360.08" lengthAdjust="spacingAndGlyphs">199524.sgw.equinix.com (27.111.228.222) hop 4</text>
<text x="2786.50" y="503.00" fill="#3a3a3a" stroke="#3a3a3a" font-size="15.3" textLength="250.09" lengthAdjust="spacingAndGlyphs">10 minutes (15:23:32 - 15:33:32)</text>
<rect x="45.60" y="505.00" width="2964.50" height="13.30" fill="#fed0cd" />
<rect x="45.60" y="518.30" width="2964.50" height="15.00" fill="#feeacd" />
<rect x="45.60" y="533.30" width="2964.50" height="14.40" fill="#e0efd5" />
<rect x="45.80" y="505.00" width="8.60" height="13.30" fill="#d8c6c5" />
<rect x="45.80" y="518.30" width="8.60" height="15.00" fill="#c9c5c2" />
<rect x="45.80" y="533.30" width="8.60" height="14.40" fill="#c4c8c2" />
<text x="15.20" y="521.00" fill="#444444" stroke="#444444" font-size="15.3" textLength="25.98" lengthAdjust="spacingAndGlyphs">290</text>
<text x="33.20" y="546.00" fill="#444444" stroke="#444444" font-size="15.3" textLength="8.02" lengthAdjust="spacingAndGlyphs">0</text>
<text x="3013.60" y="521.00" fill="#cc1414" stroke="#cc1414" font-size="15.3" textLength="16.43" lengthAdjust="spacingAndGlyphs">30</text>
<polyline points="57.0,511.7 69.3,511.7 69.3,510.5 81.7,510.5 81.7,511.1 94.0,511.1 94.0,510.5 168.1,510.5 168.1,511.1 180.5,511.1 180.5,511.7 217.5,511.7 217.5,511.1 279.3,511.1 279.3,510.5 316.4,510.5 316.4,510.0 328.7,510.0 328.7,512.8 353.4,512.8 353.4,511.7 378.1,511.7 378.1,510.5 402.8,510.5 402.8,509.4 415.2,509.4 415.2,510.5 439.9,510.5 439.9,511.1 452.2,511.1 452.2,509.4 551.0,509.4 551.0,510.5 625.1,510.5 625.1,511.7 637.5,511.7 637.5,512.8 662.2,512.8 662.2,511.1 674.5,511.1 674.5,510.5 686.9,510.5 686.9,511.7 723.9,511.7 723.9,510.5 761.0,510.5 761.0,509.4 810.4,509.4 810.4,510.5 970.9,510.5 970.9,510.0 983.3,510.0 983.3,511.7 995.6,511.7 995.6,509.4 1045.0,509.4 1045.0,510.5 1045.7,510.5 1045.7,517.2 1057.8,517.2 1057.8,512.8 1069.7,512.8 1069.7,510.5 1106.8,510.5 1106.8,510.0 1119.1,510.0 1119.1,510.5 1143.8,510.5 1143.8,510.0 1168.5,510.0 1168.5,510.5 1180.9,510.5 1180.9,510.0 1193.2,510.0 1193.2,511.1 1230.2,511.1 1230.2,510.5 1255.7,510.5 1255.7,518.9 1268.2,518.9 1268.2,510.5 1353.7,510.5 1353.7,510.0 1366.1,510.0 1366.1,510.5 1415.5,510.5 1415.5,511.7 1427.8,511.7 1427.8,510.5 1477.2,510.5 1477.2,512.8 1501.9,512.8 1501.9,510.5 1576.0,510.5 1576.0,509.4 1588.4,509.4 1588.4,511.7 1637.8,511.7 1637.8,510.5 1699.5,510.5 1699.5,510.0 1724.2,510.0 1724.2,510.5 1773.6,510.5 1773.6,511.1 1786.0,511.1 1786.0,510.5 1860.1,510.5 1860.1,508.2 1872.4,508.2 1872.4,510.5 1885.7,510.5 1885.7,515.6 1899.0,515.6 1899.0,511.1 1934.2,511.1 1934.2,511.7 1958.9,511.7 1958.9,510.5 2008.3,510.5 2008.3,510.0 2020.6,510.0 2020.6,511.7 2045.3,511.7 2045.3,510.5 2097.1,510.5 2097.1,515.6 2108.9,515.6 2108.9,510.5 2193.5,510.5 2193.5,509.4 2205.9,509.4 2205.9,510.5 2255.3,510.5 2255.3,510.0 2280.0,510.0 2280.0,511.1 2341.7,511.1 2341.7,510.5 2366.4,510.5 2366.4,509.4 2378.8,509.4 2378.8,511.7 2477.6,511.7 2477.6,510.5 2638.1,510.5 2638.1,511.7 2675.2,511.7 2675.2,509.4 2687.5,509.4 2687.5,510.5 2712.2,510.5 2712.2,511.7 2774.0,511.7 2774.0,510.5 2811.0,510.5 2811.0,511.1 2885.1,511.1 2885.1,510.5 2971.6,510.5 2971.6,511.7 3010.0,511.7" fill="none" stroke="#111111" stroke-width="2.3"/>
<rect x="54.50" y="505.00" width="26.75" height="42.90" fill="#ff0000" />
<rect x="94.00" y="505.00" width="48.75" height="42.90" fill="#ff0000" />
<rect x="167.00" y="505.00" width="50.25" height="42.90" fill="#ff0000" />
<rect x="229.25" y="505.00" width="11.75" height="42.90" fill="#ff0000" />
<rect x="303.25" y="505.00" width="24.00" height="42.90" fill="#ff0000" />
<rect x="352.50" y="505.00" width="49.00" height="42.90" fill="#ff0000" />
<rect x="413.50" y="505.00" width="25.00" height="42.90" fill="#ff0000" />
<rect x="475.50" y="505.00" width="25.25" height="42.90" fill="#ff0000" />
<rect x="512.75" y="505.00" width="49.00" height="42.90" fill="#ff0000" />
<rect x="587.00" y="505.00" width="75.70" height="42.90" fill="#ff0000" />
<rect x="687.00" y="505.00" width="37.10" height="42.90" fill="#ff0000" />
<rect x="736.10" y="505.00" width="62.40" height="42.90" fill="#ff0000" />
<rect x="835.60" y="505.00" width="61.50" height="42.90" fill="#ff0000" />
<rect x="910.10" y="505.00" width="49.10" height="42.90" fill="#ff0000" />
<rect x="971.30" y="505.00" width="74.40" height="42.90" fill="#ff0000" />
<rect x="1057.80" y="505.00" width="12.00" height="42.90" fill="#ff0000" />
<rect x="1083.10" y="505.00" width="36.80" height="42.90" fill="#ff0000" />
<rect x="1132.00" y="505.00" width="37.10" height="42.90" fill="#ff0000" />
<rect x="1181.30" y="505.00" width="37.20" height="42.90" fill="#ff0000" />
<rect x="1230.60" y="505.00" width="25.10" height="42.90" fill="#ff0000" />
<rect x="1281.00" y="505.00" width="49.10" height="42.90" fill="#ff0000" />
<rect x="1379.50" y="505.00" width="36.80" height="42.90" fill="#ff0000" />
<rect x="1428.60" y="505.00" width="99.30" height="42.90" fill="#ff0000" />
<rect x="1540.20" y="505.00" width="12.00" height="42.90" fill="#ff0000" />
<rect x="1565.30" y="505.00" width="12.00" height="42.90" fill="#ff0000" />
<rect x="1589.30" y="505.00" width="11.80" height="42.90" fill="#ff0000" />
<rect x="1626.70" y="505.00" width="24.80" height="42.90" fill="#ff0000" />
<rect x="1663.80" y="505.00" width="60.90" height="42.90" fill="#ff0000" />
<rect x="1750.30" y="505.00" width="24.50" height="42.90" fill="#ff0000" />
<rect x="1787.40" y="505.00" width="36.80" height="42.90" fill="#ff0000" />
<rect x="1836.60" y="505.00" width="49.10" height="42.90" fill="#ff0000" />
<rect x="1899.00" y="505.00" width="11.80" height="42.90" fill="#ff0000" />
<rect x="1936.10" y="505.00" width="11.80" height="42.90" fill="#ff0000" />
<rect x="1960.20" y="505.00" width="86.00" height="42.90" fill="#ff0000" />
<rect x="2060.00" y="505.00" width="37.10" height="42.90" fill="#ff0000" />
<rect x="2108.80" y="505.00" width="135.70" height="42.90" fill="#ff0000" />
<rect x="2256.80" y="505.00" width="37.10" height="42.90" fill="#ff0000" />
<rect x="2318.90" y="505.00" width="37.10" height="42.90" fill="#ff0000" />
<rect x="2368.10" y="505.00" width="37.10" height="42.90" fill="#ff0000" />
<rect x="2417.30" y="505.00" width="62.20" height="42.90" fill="#ff0000" />
<rect x="2491.80" y="505.00" width="37.10" height="42.90" fill="#ff0000" />
<rect x="2540.90" y="505.00" width="13.00" height="42.90" fill="#ff0000" />
<rect x="2566.20" y="505.00" width="37.10" height="42.90" fill="#ff0000" />
<rect x="2615.40" y="505.00" width="86.40" height="42.90" fill="#ff0000" />
<rect x="2714.90" y="505.00" width="61.10" height="42.90" fill="#ff0000" />
<rect x="2801.40" y="505.00" width="86.20" height="42.90" fill="#ff0000" />
<rect x="2899.90" y="505.00" width="110.00" height="42.90" fill="#ff0000" />
<line x1="22.90" y1="548.40" x2="3010.70" y2="548.40" stroke="#777777" stroke-width="1.4" />
<line x1="45.00" y1="505.30" x2="45.00" y2="558.80" stroke="#707070" stroke-width="1.5" />
<line x1="3010.60" y1="548.40" x2="3010.60" y2="557.80" stroke="#777777" stroke-width="1.2" />
<line x1="82.60" y1="548.40" x2="82.60" y2="552.30" stroke="#777777" stroke-width="1.2" />
<text x="67.80" y="564.00" fill="#27622b" stroke="#27622b" stroke-width="0.1" font-size="15.3" textLength="66.46" lengthAdjust="spacingAndGlyphs">15:23:40</text>
<line x1="181.43" y1="548.40" x2="181.43" y2="552.30" stroke="#777777" stroke-width="1.2" />
<text x="166.63" y="564.00" fill="#27622b" stroke="#27622b" stroke-width="0.1" font-size="15.3" textLength="66.46" lengthAdjust="spacingAndGlyphs">15:24:00</text>
<line x1="280.26" y1="548.40" x2="280.26" y2="552.30" stroke="#777777" stroke-width="1.2" />
<text x="265.46" y="564.00" fill="#27622b" stroke="#27622b" stroke-width="0.1" font-size="15.3" textLength="66.46" lengthAdjust="spacingAndGlyphs">15:24:20</text>
<line x1="379.09" y1="548.40" x2="379.09" y2="552.30" stroke="#777777" stroke-width="1.2" />
<text x="364.29" y="564.00" fill="#27622b" stroke="#27622b" stroke-width="0.1" font-size="15.3" textLength="66.46" lengthAdjust="spacingAndGlyphs">15:24:40</text>
<line x1="477.92" y1="548.40" x2="477.92" y2="552.30" stroke="#777777" stroke-width="1.2" />
<text x="463.12" y="564.00" fill="#27622b" stroke="#27622b" stroke-width="0.1" font-size="15.3" textLength="66.46" lengthAdjust="spacingAndGlyphs">15:25:00</text>
<line x1="576.75" y1="548.40" x2="576.75" y2="552.30" stroke="#777777" stroke-width="1.2" />
<text x="561.95" y="564.00" fill="#27622b" stroke="#27622b" stroke-width="0.1" font-size="15.3" textLength="66.46" lengthAdjust="spacingAndGlyphs">15:25:20</text>
<line x1="675.58" y1="548.40" x2="675.58" y2="552.30" stroke="#777777" stroke-width="1.2" />
<text x="660.78" y="564.00" fill="#27622b" stroke="#27622b" stroke-width="0.1" font-size="15.3" textLength="66.46" lengthAdjust="spacingAndGlyphs">15:25:40</text>
<line x1="774.41" y1="548.40" x2="774.41" y2="552.30" stroke="#777777" stroke-width="1.2" />
<text x="759.61" y="564.00" fill="#27622b" stroke="#27622b" stroke-width="0.1" font-size="15.3" textLength="66.46" lengthAdjust="spacingAndGlyphs">15:26:00</text>
<line x1="873.24" y1="548.40" x2="873.24" y2="552.30" stroke="#777777" stroke-width="1.2" />
<text x="858.44" y="564.00" fill="#27622b" stroke="#27622b" stroke-width="0.1" font-size="15.3" textLength="66.46" lengthAdjust="spacingAndGlyphs">15:26:20</text>
<line x1="972.07" y1="548.40" x2="972.07" y2="552.30" stroke="#777777" stroke-width="1.2" />
<text x="957.27" y="564.00" fill="#27622b" stroke="#27622b" stroke-width="0.1" font-size="15.3" textLength="66.46" lengthAdjust="spacingAndGlyphs">15:26:40</text>
<line x1="1070.90" y1="548.40" x2="1070.90" y2="552.30" stroke="#777777" stroke-width="1.2" />
<text x="1056.10" y="564.00" fill="#27622b" stroke="#27622b" stroke-width="0.1" font-size="15.3" textLength="66.46" lengthAdjust="spacingAndGlyphs">15:27:00</text>
<line x1="1169.73" y1="548.40" x2="1169.73" y2="552.30" stroke="#777777" stroke-width="1.2" />
<text x="1154.93" y="564.00" fill="#27622b" stroke="#27622b" stroke-width="0.1" font-size="15.3" textLength="66.46" lengthAdjust="spacingAndGlyphs">15:27:20</text>
<line x1="1268.56" y1="548.40" x2="1268.56" y2="552.30" stroke="#777777" stroke-width="1.2" />
<text x="1253.76" y="564.00" fill="#27622b" stroke="#27622b" stroke-width="0.1" font-size="15.3" textLength="66.46" lengthAdjust="spacingAndGlyphs">15:27:40</text>
<line x1="1367.39" y1="548.40" x2="1367.39" y2="552.30" stroke="#777777" stroke-width="1.2" />
<text x="1352.59" y="564.00" fill="#27622b" stroke="#27622b" stroke-width="0.1" font-size="15.3" textLength="66.46" lengthAdjust="spacingAndGlyphs">15:28:00</text>
<line x1="1466.22" y1="548.40" x2="1466.22" y2="552.30" stroke="#777777" stroke-width="1.2" />
<text x="1451.42" y="564.00" fill="#27622b" stroke="#27622b" stroke-width="0.1" font-size="15.3" textLength="66.46" lengthAdjust="spacingAndGlyphs">15:28:20</text>
<line x1="1565.05" y1="548.40" x2="1565.05" y2="552.30" stroke="#777777" stroke-width="1.2" />
<text x="1550.25" y="564.00" fill="#27622b" stroke="#27622b" stroke-width="0.1" font-size="15.3" textLength="66.46" lengthAdjust="spacingAndGlyphs">15:28:40</text>
<line x1="1663.88" y1="548.40" x2="1663.88" y2="552.30" stroke="#777777" stroke-width="1.2" />
<text x="1649.08" y="564.00" fill="#27622b" stroke="#27622b" stroke-width="0.1" font-size="15.3" textLength="66.46" lengthAdjust="spacingAndGlyphs">15:29:00</text>
<line x1="1762.71" y1="548.40" x2="1762.71" y2="552.30" stroke="#777777" stroke-width="1.2" />
<text x="1747.91" y="564.00" fill="#27622b" stroke="#27622b" stroke-width="0.1" font-size="15.3" textLength="66.46" lengthAdjust="spacingAndGlyphs">15:29:20</text>
<line x1="1861.54" y1="548.40" x2="1861.54" y2="552.30" stroke="#777777" stroke-width="1.2" />
<text x="1846.74" y="564.00" fill="#27622b" stroke="#27622b" stroke-width="0.1" font-size="15.3" textLength="66.46" lengthAdjust="spacingAndGlyphs">15:29:40</text>
<line x1="1960.37" y1="548.40" x2="1960.37" y2="552.30" stroke="#777777" stroke-width="1.2" />
<text x="1945.57" y="564.00" fill="#27622b" stroke="#27622b" stroke-width="0.1" font-size="15.3" textLength="66.46" lengthAdjust="spacingAndGlyphs">15:30:00</text>
<line x1="2059.20" y1="548.40" x2="2059.20" y2="552.30" stroke="#777777" stroke-width="1.2" />
<text x="2044.40" y="564.00" fill="#27622b" stroke="#27622b" stroke-width="0.1" font-size="15.3" textLength="66.46" lengthAdjust="spacingAndGlyphs">15:30:20</text>
<line x1="2158.03" y1="548.40" x2="2158.03" y2="552.30" stroke="#777777" stroke-width="1.2" />
<text x="2143.23" y="564.00" fill="#27622b" stroke="#27622b" stroke-width="0.1" font-size="15.3" textLength="66.46" lengthAdjust="spacingAndGlyphs">15:30:40</text>
<line x1="2256.86" y1="548.40" x2="2256.86" y2="552.30" stroke="#777777" stroke-width="1.2" />
<text x="2242.06" y="564.00" fill="#27622b" stroke="#27622b" stroke-width="0.1" font-size="15.3" textLength="66.46" lengthAdjust="spacingAndGlyphs">15:31:00</text>
<line x1="2355.69" y1="548.40" x2="2355.69" y2="552.30" stroke="#777777" stroke-width="1.2" />
<text x="2340.89" y="564.00" fill="#27622b" stroke="#27622b" stroke-width="0.1" font-size="15.3" textLength="66.46" lengthAdjust="spacingAndGlyphs">15:31:20</text>
<line x1="2454.52" y1="548.40" x2="2454.52" y2="552.30" stroke="#777777" stroke-width="1.2" />
<text x="2439.72" y="564.00" fill="#27622b" stroke="#27622b" stroke-width="0.1" font-size="15.3" textLength="66.46" lengthAdjust="spacingAndGlyphs">15:31:40</text>
<line x1="2553.35" y1="548.40" x2="2553.35" y2="552.30" stroke="#777777" stroke-width="1.2" />
<text x="2538.55" y="564.00" fill="#27622b" stroke="#27622b" stroke-width="0.1" font-size="15.3" textLength="66.46" lengthAdjust="spacingAndGlyphs">15:32:00</text>
<line x1="2652.18" y1="548.40" x2="2652.18" y2="552.30" stroke="#777777" stroke-width="1.2" />
<text x="2637.38" y="564.00" fill="#27622b" stroke="#27622b" stroke-width="0.1" font-size="15.3" textLength="66.46" lengthAdjust="spacingAndGlyphs">15:32:20</text>
<line x1="2751.01" y1="548.40" x2="2751.01" y2="552.30" stroke="#777777" stroke-width="1.2" />
<text x="2736.21" y="564.00" fill="#27622b" stroke="#27622b" stroke-width="0.1" font-size="15.3" textLength="66.46" lengthAdjust="spacingAndGlyphs">15:32:40</text>
<line x1="2849.84" y1="548.40" x2="2849.84" y2="552.30" stroke="#777777" stroke-width="1.2" />
<text x="2835.04" y="564.00" fill="#27622b" stroke="#27622b" stroke-width="0.1" font-size="15.3" textLength="66.46" lengthAdjust="spacingAndGlyphs">15:33:00</text>
<line x1="2948.67" y1="548.40" x2="2948.67" y2="552.30" stroke="#777777" stroke-width="1.2" />
<text x="2933.87" y="564.00" fill="#27622b" stroke="#27622b" stroke-width="0.1" font-size="15.3" textLength="66.46" lengthAdjust="spacingAndGlyphs">15:33:20</text>
<line x1="0.00" y1="569.50" x2="3040.00" y2="569.50" stroke="#c6c6c6" stroke-width="1.3" />
<text x="3.00" y="587.00" fill="#3a3a3a" stroke="#3a3a3a" font-size="15.3" textLength="277.79" lengthAdjust="spacingAndGlyphs">10.255.48.196 (10.255.48.196) hop 5</text>
<text x="2786.50" y="587.00" fill="#3a3a3a" stroke="#3a3a3a" font-size="15.3" textLength="250.09" lengthAdjust="spacingAndGlyphs">10 minutes (15:23:32 - 15:33:32)</text>
<rect x="45.60" y="589.00" width="2964.50" height="13.30" fill="#fed0cd" />
<rect x="45.60" y="602.30" width="2964.50" height="15.00" fill="#feeacd" />
<rect x="45.60" y="617.30" width="2964.50" height="14.40" fill="#e0efd5" />
<rect x="45.80" y="589.00" width="8.60" height="13.30" fill="#d8c6c5" />
<rect x="45.80" y="602.30" width="8.60" height="15.00" fill="#c9c5c2" />
<rect x="45.80" y="617.30" width="8.60" height="14.40" fill="#c4c8c2" />
<text x="15.20" y="605.00" fill="#444444" stroke="#444444" font-size="15.3" textLength="25.98" lengthAdjust="spacingAndGlyphs">290</text>
<text x="33.20" y="630.00" fill="#444444" stroke="#444444" font-size="15.3" textLength="8.02" lengthAdjust="spacingAndGlyphs">0</text>
<text x="3013.60" y="605.00" fill="#cc1414" stroke="#cc1414" font-size="15.3" textLength="16.43" lengthAdjust="spacingAndGlyphs">30</text>
<polyline points="57.0,594.8 105.3,594.8 105.3,603.1 117.8,603.1 117.8,594.8 131.1,594.8 131.1,594.5 180.5,594.5 180.5,594.8 192.8,594.8 192.8,594.5 217.5,594.5 217.5,594.8 229.9,594.8 229.9,595.5 254.6,595.5 254.6,594.8 266.9,594.8 266.9,595.2 279.3,595.2 279.3,594.5 304.0,594.5 304.0,594.8 315.9,594.8 315.9,604.4 328.9,604.4 328.9,594.8 353.4,594.8 353.4,594.1 390.5,594.1 390.5,594.8 415.2,594.8 415.2,594.5 427.5,594.5 427.5,595.5 476.9,595.5 476.9,595.2 489.3,595.2 489.3,594.8 525.2,594.8 525.2,608.1 536.5,608.1 536.5,594.8 538.7,594.8 538.7,595.5 551.0,595.5 551.0,594.8 674.5,594.8 674.5,594.5 686.9,594.5 686.9,594.8 735.4,594.8 735.4,608.4 750.4,608.4 750.4,594.1 761.0,594.1 761.0,595.2 773.3,595.2 773.3,594.8 872.1,594.8 872.1,595.5 884.5,595.5 884.5,594.1 909.2,594.1 909.2,595.2 945.5,595.2 945.5,604.7 960.2,604.7 960.2,594.8 1008.0,594.8 1008.0,594.1 1032.7,594.1 1032.7,594.8 1045.0,594.8 1045.0,593.4 1094.4,593.4 1094.4,594.5 1106.8,594.5 1106.8,595.5 1119.1,595.5 1119.1,594.8 1157.0,594.8 1157.0,603.5 1169.0,603.5 1169.0,594.8 1254.9,594.8 1254.9,594.1 1292.0,594.1 1292.0,594.8 1316.7,594.8 1316.7,595.5 1353.7,595.5 1353.7,594.8 1366.7,594.8 1366.7,602.1 1380.0,602.1 1380.0,594.8 1576.8,594.8 1576.8,603.5 1590.0,603.5 1590.0,594.8 1699.5,594.8 1699.5,596.3 1711.9,596.3 1711.9,594.8 1748.9,594.8 1748.9,594.5 1786.0,594.5 1786.0,594.8 1835.4,594.8 1835.4,596.3 1872.4,596.3 1872.4,594.8 1958.9,594.8 1958.9,596.3 1971.2,596.3 1971.2,594.1 2008.3,594.1 2008.3,594.5 2020.6,594.5 2020.6,594.8 2033.0,594.8 2033.0,594.1 2045.3,594.1 2045.3,594.5 2057.7,594.5 2057.7,594.8 2094.7,594.8 2094.7,595.2 2107.1,595.2 2107.1,594.8 2158.0,594.8 2158.0,603.5 2171.0,603.5 2171.0,594.8 2280.0,594.8 2280.0,594.1 2304.7,594.1 2304.7,594.8 2367.3,594.8 2367.3,604.7 2380.9,604.7 2380.9,594.8 2403.5,594.8 2403.5,595.2 2440.5,595.2 2440.5,593.4 2452.9,593.4 2452.9,594.8 2477.6,594.8 2477.6,595.2 2502.3,595.2 2502.3,594.8 2577.5,594.8 2577.5,601.3 2592.0,601.3 2592.0,594.8 2675.2,594.8 2675.2,595.2 2699.9,595.2 2699.9,594.8 2749.3,594.8 2749.3,595.2 2774.0,595.2 2774.0,594.8 2860.4,594.8 2860.4,594.5 2872.8,594.5 2872.8,594.8 2922.2,594.8 2922.2,595.2 2996.3,595.2 2996.3,593.4 2998.4,593.4 2998.4,604.7 3010.0,604.7" fill="none" stroke="#111111" stroke-width="2.3"/>
<rect x="117.75" y="589.00" width="25.00" height="42.90" fill="#ff0000" />
<rect x="192.00" y="589.00" width="12.00" height="42.90" fill="#ff0000" />
<rect x="217.25" y="589.00" width="23.75" height="42.90" fill="#ff0000" />
<rect x="389.50" y="589.00" width="37.00" height="42.90" fill="#ff0000" />
<rect x="438.50" y="589.00" width="12.00" height="42.90" fill="#ff0000" />
<rect x="475.50" y="589.00" width="12.00" height="42.90" fill="#ff0000" />
<rect x="536.50" y="589.00" width="13.25" height="42.90" fill="#ff0000" />
<rect x="662.70" y="589.00" width="12.30" height="42.90" fill="#ff0000" />
<rect x="810.60" y="589.00" width="12.00" height="42.90" fill="#ff0000" />
<rect x="860.00" y="589.00" width="12.80" height="42.90" fill="#ff0000" />
<rect x="885.00" y="589.00" width="12.10" height="42.90" fill="#ff0000" />
<rect x="1057.80" y="589.00" width="25.30" height="42.90" fill="#ff0000" />
<rect x="1106.90" y="589.00" width="13.00" height="42.90" fill="#ff0000" />
<rect x="1132.00" y="589.00" width="25.00" height="42.90" fill="#ff0000" />
<rect x="1169.10" y="589.00" width="12.20" height="42.90" fill="#ff0000" />
<rect x="1218.30" y="589.00" width="37.40" height="42.90" fill="#ff0000" />
<rect x="1676.10" y="589.00" width="12.70" height="42.90" fill="#ff0000" />
<rect x="1762.30" y="589.00" width="12.50" height="42.90" fill="#ff0000" />
<rect x="1836.60" y="589.00" width="25.10" height="42.90" fill="#ff0000" />
<rect x="1885.70" y="589.00" width="13.30" height="42.90" fill="#ff0000" />
<rect x="1973.20" y="589.00" width="12.10" height="42.90" fill="#ff0000" />
<rect x="1997.30" y="589.00" width="11.80" height="42.90" fill="#ff0000" />
<rect x="2060.00" y="589.00" width="11.70" height="42.90" fill="#ff0000" />
<rect x="2097.10" y="589.00" width="11.70" height="42.90" fill="#ff0000" />
<rect x="2121.10" y="589.00" width="24.90" height="42.90" fill="#ff0000" />
<rect x="2220.40" y="589.00" width="12.00" height="42.90" fill="#ff0000" />
<rect x="2269.80" y="589.00" width="11.80" height="42.90" fill="#ff0000" />
<rect x="2293.90" y="589.00" width="13.00" height="42.90" fill="#ff0000" />
<rect x="2331.00" y="589.00" width="13.00" height="42.90" fill="#ff0000" />
<rect x="2405.20" y="589.00" width="12.00" height="42.90" fill="#ff0000" />
<rect x="2491.80" y="589.00" width="13.00" height="42.90" fill="#ff0000" />
<rect x="2788.30" y="589.00" width="13.10" height="42.90" fill="#ff0000" />
<rect x="2949.00" y="589.00" width="25.10" height="42.90" fill="#ff0000" />
<line x1="22.90" y1="632.40" x2="3010.70" y2="632.40" stroke="#777777" stroke-width="1.4" />
<line x1="45.00" y1="589.30" x2="45.00" y2="642.80" stroke="#707070" stroke-width="1.5" />
<line x1="3010.60" y1="632.40" x2="3010.60" y2="641.80" stroke="#777777" stroke-width="1.2" />
<line x1="82.60" y1="632.40" x2="82.60" y2="636.30" stroke="#777777" stroke-width="1.2" />
<text x="67.80" y="648.00" fill="#27622b" stroke="#27622b" stroke-width="0.1" font-size="15.3" textLength="66.46" lengthAdjust="spacingAndGlyphs">15:23:40</text>
<line x1="181.43" y1="632.40" x2="181.43" y2="636.30" stroke="#777777" stroke-width="1.2" />
<text x="166.63" y="648.00" fill="#27622b" stroke="#27622b" stroke-width="0.1" font-size="15.3" textLength="66.46" lengthAdjust="spacingAndGlyphs">15:24:00</text>
<line x1="280.26" y1="632.40" x2="280.26" y2="636.30" stroke="#777777" stroke-width="1.2" />
<text x="265.46" y="648.00" fill="#27622b" stroke="#27622b" stroke-width="0.1" font-size="15.3" textLength="66.46" lengthAdjust="spacingAndGlyphs">15:24:20</text>
<line x1="379.09" y1="632.40" x2="379.09" y2="636.30" stroke="#777777" stroke-width="1.2" />
<text x="364.29" y="648.00" fill="#27622b" stroke="#27622b" stroke-width="0.1" font-size="15.3" textLength="66.46" lengthAdjust="spacingAndGlyphs">15:24:40</text>
<line x1="477.92" y1="632.40" x2="477.92" y2="636.30" stroke="#777777" stroke-width="1.2" />
<text x="463.12" y="648.00" fill="#27622b" stroke="#27622b" stroke-width="0.1" font-size="15.3" textLength="66.46" lengthAdjust="spacingAndGlyphs">15:25:00</text>
<line x1="576.75" y1="632.40" x2="576.75" y2="636.30" stroke="#777777" stroke-width="1.2" />
<text x="561.95" y="648.00" fill="#27622b" stroke="#27622b" stroke-width="0.1" font-size="15.3" textLength="66.46" lengthAdjust="spacingAndGlyphs">15:25:20</text>
<line x1="675.58" y1="632.40" x2="675.58" y2="636.30" stroke="#777777" stroke-width="1.2" />
<text x="660.78" y="648.00" fill="#27622b" stroke="#27622b" stroke-width="0.1" font-size="15.3" textLength="66.46" lengthAdjust="spacingAndGlyphs">15:25:40</text>
<line x1="774.41" y1="632.40" x2="774.41" y2="636.30" stroke="#777777" stroke-width="1.2" />
<text x="759.61" y="648.00" fill="#27622b" stroke="#27622b" stroke-width="0.1" font-size="15.3" textLength="66.46" lengthAdjust="spacingAndGlyphs">15:26:00</text>
<line x1="873.24" y1="632.40" x2="873.24" y2="636.30" stroke="#777777" stroke-width="1.2" />
<text x="858.44" y="648.00" fill="#27622b" stroke="#27622b" stroke-width="0.1" font-size="15.3" textLength="66.46" lengthAdjust="spacingAndGlyphs">15:26:20</text>
<line x1="972.07" y1="632.40" x2="972.07" y2="636.30" stroke="#777777" stroke-width="1.2" />
<text x="957.27" y="648.00" fill="#27622b" stroke="#27622b" stroke-width="0.1" font-size="15.3" textLength="66.46" lengthAdjust="spacingAndGlyphs">15:26:40</text>
<line x1="1070.90" y1="632.40" x2="1070.90" y2="636.30" stroke="#777777" stroke-width="1.2" />
<text x="1056.10" y="648.00" fill="#27622b" stroke="#27622b" stroke-width="0.1" font-size="15.3" textLength="66.46" lengthAdjust="spacingAndGlyphs">15:27:00</text>
<line x1="1169.73" y1="632.40" x2="1169.73" y2="636.30" stroke="#777777" stroke-width="1.2" />
<text x="1154.93" y="648.00" fill="#27622b" stroke="#27622b" stroke-width="0.1" font-size="15.3" textLength="66.46" lengthAdjust="spacingAndGlyphs">15:27:20</text>
<line x1="1268.56" y1="632.40" x2="1268.56" y2="636.30" stroke="#777777" stroke-width="1.2" />
<text x="1253.76" y="648.00" fill="#27622b" stroke="#27622b" stroke-width="0.1" font-size="15.3" textLength="66.46" lengthAdjust="spacingAndGlyphs">15:27:40</text>
<line x1="1367.39" y1="632.40" x2="1367.39" y2="636.30" stroke="#777777" stroke-width="1.2" />
<text x="1352.59" y="648.00" fill="#27622b" stroke="#27622b" stroke-width="0.1" font-size="15.3" textLength="66.46" lengthAdjust="spacingAndGlyphs">15:28:00</text>
<line x1="1466.22" y1="632.40" x2="1466.22" y2="636.30" stroke="#777777" stroke-width="1.2" />
<text x="1451.42" y="648.00" fill="#27622b" stroke="#27622b" stroke-width="0.1" font-size="15.3" textLength="66.46" lengthAdjust="spacingAndGlyphs">15:28:20</text>
<line x1="1565.05" y1="632.40" x2="1565.05" y2="636.30" stroke="#777777" stroke-width="1.2" />
<text x="1550.25" y="648.00" fill="#27622b" stroke="#27622b" stroke-width="0.1" font-size="15.3" textLength="66.46" lengthAdjust="spacingAndGlyphs">15:28:40</text>
<line x1="1663.88" y1="632.40" x2="1663.88" y2="636.30" stroke="#777777" stroke-width="1.2" />
<text x="1649.08" y="648.00" fill="#27622b" stroke="#27622b" stroke-width="0.1" font-size="15.3" textLength="66.46" lengthAdjust="spacingAndGlyphs">15:29:00</text>
<line x1="1762.71" y1="632.40" x2="1762.71" y2="636.30" stroke="#777777" stroke-width="1.2" />
<text x="1747.91" y="648.00" fill="#27622b" stroke="#27622b" stroke-width="0.1" font-size="15.3" textLength="66.46" lengthAdjust="spacingAndGlyphs">15:29:20</text>
<line x1="1861.54" y1="632.40" x2="1861.54" y2="636.30" stroke="#777777" stroke-width="1.2" />
<text x="1846.74" y="648.00" fill="#27622b" stroke="#27622b" stroke-width="0.1" font-size="15.3" textLength="66.46" lengthAdjust="spacingAndGlyphs">15:29:40</text>
<line x1="1960.37" y1="632.40" x2="1960.37" y2="636.30" stroke="#777777" stroke-width="1.2" />
<text x="1945.57" y="648.00" fill="#27622b" stroke="#27622b" stroke-width="0.1" font-size="15.3" textLength="66.46" lengthAdjust="spacingAndGlyphs">15:30:00</text>
<line x1="2059.20" y1="632.40" x2="2059.20" y2="636.30" stroke="#777777" stroke-width="1.2" />
<text x="2044.40" y="648.00" fill="#27622b" stroke="#27622b" stroke-width="0.1" font-size="15.3" textLength="66.46" lengthAdjust="spacingAndGlyphs">15:30:20</text>
<line x1="2158.03" y1="632.40" x2="2158.03" y2="636.30" stroke="#777777" stroke-width="1.2" />
<text x="2143.23" y="648.00" fill="#27622b" stroke="#27622b" stroke-width="0.1" font-size="15.3" textLength="66.46" lengthAdjust="spacingAndGlyphs">15:30:40</text>
<line x1="2256.86" y1="632.40" x2="2256.86" y2="636.30" stroke="#777777" stroke-width="1.2" />
<text x="2242.06" y="648.00" fill="#27622b" stroke="#27622b" stroke-width="0.1" font-size="15.3" textLength="66.46" lengthAdjust="spacingAndGlyphs">15:31:00</text>
<line x1="2355.69" y1="632.40" x2="2355.69" y2="636.30" stroke="#777777" stroke-width="1.2" />
<text x="2340.89" y="648.00" fill="#27622b" stroke="#27622b" stroke-width="0.1" font-size="15.3" textLength="66.46" lengthAdjust="spacingAndGlyphs">15:31:20</text>
<line x1="2454.52" y1="632.40" x2="2454.52" y2="636.30" stroke="#777777" stroke-width="1.2" />
<text x="2439.72" y="648.00" fill="#27622b" stroke="#27622b" stroke-width="0.1" font-size="15.3" textLength="66.46" lengthAdjust="spacingAndGlyphs">15:31:40</text>
<line x1="2553.35" y1="632.40" x2="2553.35" y2="636.30" stroke="#777777" stroke-width="1.2" />
<text x="2538.55" y="648.00" fill="#27622b" stroke="#27622b" stroke-width="0.1" font-size="15.3" textLength="66.46" lengthAdjust="spacingAndGlyphs">15:32:00</text>
<line x1="2652.18" y1="632.40" x2="2652.18" y2="636.30" stroke="#777777" stroke-width="1.2" />
<text x="2637.38" y="648.00" fill="#27622b" stroke="#27622b" stroke-width="0.1" font-size="15.3" textLength="66.46" lengthAdjust="spacingAndGlyphs">15:32:20</text>
<line x1="2751.01" y1="632.40" x2="2751.01" y2="636.30" stroke="#777777" stroke-width="1.2" />
<text x="2736.21" y="648.00" fill="#27622b" stroke="#27622b" stroke-width="0.1" font-size="15.3" textLength="66.46" lengthAdjust="spacingAndGlyphs">15:32:40</text>
<line x1="2849.84" y1="632.40" x2="2849.84" y2="636.30" stroke="#777777" stroke-width="1.2" />
<text x="2835.04" y="648.00" fill="#27622b" stroke="#27622b" stroke-width="0.1" font-size="15.3" textLength="66.46" lengthAdjust="spacingAndGlyphs">15:33:00</text>
<line x1="2948.67" y1="632.40" x2="2948.67" y2="636.30" stroke="#777777" stroke-width="1.2" />
<text x="2933.87" y="648.00" fill="#27622b" stroke="#27622b" stroke-width="0.1" font-size="15.3" textLength="66.46" lengthAdjust="spacingAndGlyphs">15:33:20</text>
<line x1="0.00" y1="653.50" x2="3040.00" y2="653.50" stroke="#c6c6c6" stroke-width="1.3" />
<text x="3.00" y="671.00" fill="#3a3a3a" stroke="#3a3a3a" font-size="15.3" textLength="241.40" lengthAdjust="spacingAndGlyphs">92.223.17.3 (92.223.17.3) hop 6</text>
<text x="2786.50" y="671.00" fill="#3a3a3a" stroke="#3a3a3a" font-size="15.3" textLength="250.09" lengthAdjust="spacingAndGlyphs">10 minutes (15:23:32 - 15:33:32)</text>
<rect x="45.60" y="673.00" width="2964.50" height="13.30" fill="#fed0cd" />
<rect x="45.60" y="686.30" width="2964.50" height="15.00" fill="#feeacd" />
<rect x="45.60" y="701.30" width="2964.50" height="14.40" fill="#e0efd5" />
<rect x="45.80" y="673.00" width="8.60" height="13.30" fill="#d8c6c5" />
<rect x="45.80" y="686.30" width="8.60" height="15.00" fill="#c9c5c2" />
<rect x="45.80" y="701.30" width="8.60" height="14.40" fill="#c4c8c2" />
<text x="15.20" y="689.00" fill="#444444" stroke="#444444" font-size="15.3" textLength="25.98" lengthAdjust="spacingAndGlyphs">290</text>
<text x="33.20" y="714.00" fill="#444444" stroke="#444444" font-size="15.3" textLength="8.02" lengthAdjust="spacingAndGlyphs">0</text>
<text x="3013.60" y="689.00" fill="#cc1414" stroke="#cc1414" font-size="15.3" textLength="16.43" lengthAdjust="spacingAndGlyphs">30</text>
<polyline points="57.0,678.5 106.4,678.5 106.4,677.1 118.7,677.1 118.7,678.5 254.4,678.5 254.4,685.0 267.7,685.0 267.7,678.5 328.7,678.5 328.7,679.3 353.4,679.3 353.4,678.5 365.8,678.5 365.8,677.8 390.5,677.8 390.5,678.5 427.5,678.5 427.5,677.8 439.9,677.8 439.9,678.5 538.7,678.5 538.7,678.2 551.0,678.2 551.0,678.5 588.1,678.5 588.1,677.8 600.4,677.8 600.4,678.5 612.8,678.5 612.8,678.2 625.1,678.2 625.1,677.8 649.8,677.8 649.8,678.2 711.6,678.2 711.6,678.5 798.0,678.5 798.0,678.2 822.7,678.2 822.7,678.5 884.5,678.5 884.5,678.2 896.8,678.2 896.8,678.5 933.9,678.5 933.9,677.8 946.2,677.8 946.2,678.5 1279.6,678.5 1279.6,679.3 1329.0,679.3 1329.0,678.5 1341.4,678.5 1341.4,677.8 1353.7,677.8 1353.7,678.5 1390.8,678.5 1390.8,678.2 1427.8,678.2 1427.8,678.5 1465.2,678.5 1465.2,686.3 1478.3,686.3 1478.3,678.5 1489.6,678.5 1489.6,678.9 1526.6,678.9 1526.6,677.8 1551.3,677.8 1551.3,678.2 1576.0,678.2 1576.0,679.3 1625.4,679.3 1625.4,677.8 1662.5,677.8 1662.5,678.5 1675.0,678.5 1675.0,687.5 1689.3,687.5 1689.3,678.5 1699.5,678.5 1699.5,678.2 1711.9,678.2 1711.9,678.5 1884.8,678.5 1884.8,678.9 1934.2,678.9 1934.2,678.2 1946.5,678.2 1946.5,678.5 1958.9,678.5 1958.9,677.8 1983.6,677.8 1983.6,678.5 1995.9,678.5 1995.9,677.1 2008.3,677.1 2008.3,678.5 2045.3,678.5 2045.3,678.9 2070.0,678.9 2070.0,678.5 2082.4,678.5 2082.4,679.3 2094.7,679.3 2094.7,678.5 2096.3,678.5 2096.3,687.5 2110.1,687.5 2110.1,678.5 2156.5,678.5 2156.5,677.8 2205.9,677.8 2205.9,680.0 2218.2,680.0 2218.2,678.5 2267.6,678.5 2267.6,680.0 2341.7,680.0 2341.7,678.5 2378.8,678.5 2378.8,677.8 2391.1,677.8 2391.1,678.5 2403.5,678.5 2403.5,678.9 2428.2,678.9 2428.2,677.1 2440.5,677.1 2440.5,679.3 2452.9,679.3 2452.9,678.5 2551.7,678.5 2551.7,677.8 2564.0,677.8 2564.0,679.3 2613.4,679.3 2613.4,678.5 2650.5,678.5 2650.5,680.0 2687.5,680.0 2687.5,678.5 2798.7,678.5 2798.7,679.3 2823.4,679.3 2823.4,678.5 2897.5,678.5 2897.5,678.9 2909.8,678.9 2909.8,678.5 2971.6,678.5 2971.6,678.2 2996.3,678.2 2996.3,677.8 3010.0,677.8" fill="none" stroke="#111111" stroke-width="2.3"/>
<rect x="81.00" y="673.00" width="13.30" height="42.90" fill="#ff0000" />
<rect x="118.10" y="673.00" width="13.30" height="42.90" fill="#ff0000" />
<rect x="155.40" y="673.00" width="12.10" height="42.90" fill="#ff0000" />
<rect x="315.90" y="673.00" width="12.30" height="42.90" fill="#ff0000" />
<rect x="365.30" y="673.00" width="13.20" height="42.90" fill="#ff0000" />
<rect x="402.60" y="673.00" width="25.10" height="42.90" fill="#ff0000" />
<rect x="476.80" y="673.00" width="12.00" height="42.90" fill="#ff0000" />
<rect x="551.30" y="673.00" width="12.00" height="42.90" fill="#ff0000" />
<rect x="625.70" y="673.00" width="12.10" height="42.90" fill="#ff0000" />
<rect x="649.90" y="673.00" width="12.80" height="42.90" fill="#ff0000" />
<rect x="736.10" y="673.00" width="13.10" height="42.90" fill="#ff0000" />
<rect x="835.60" y="673.00" width="24.40" height="42.90" fill="#ff0000" />
<rect x="872.80" y="673.00" width="12.20" height="42.90" fill="#ff0000" />
<rect x="959.20" y="673.00" width="12.10" height="42.90" fill="#ff0000" />
<rect x="1057.80" y="673.00" width="12.00" height="42.90" fill="#ff0000" />
<rect x="1169.10" y="673.00" width="12.20" height="42.90" fill="#ff0000" />
<rect x="1218.50" y="673.00" width="12.00" height="42.90" fill="#ff0000" />
<rect x="1243.90" y="673.00" width="23.80" height="42.90" fill="#ff0000" />
<rect x="1293.00" y="673.00" width="25.10" height="42.90" fill="#ff0000" />
<rect x="1404.60" y="673.00" width="11.70" height="42.90" fill="#ff0000" />
<rect x="1441.70" y="673.00" width="12.00" height="42.90" fill="#ff0000" />
<rect x="1490.80" y="673.00" width="12.30" height="42.90" fill="#ff0000" />
<rect x="1527.90" y="673.00" width="24.30" height="42.90" fill="#ff0000" />
<rect x="1577.30" y="673.00" width="23.80" height="42.90" fill="#ff0000" />
<rect x="1614.40" y="673.00" width="12.30" height="42.90" fill="#ff0000" />
<rect x="1836.60" y="673.00" width="25.10" height="42.90" fill="#ff0000" />
<rect x="1873.70" y="673.00" width="25.30" height="42.90" fill="#ff0000" />
<rect x="2195.30" y="673.00" width="12.10" height="42.90" fill="#ff0000" />
<rect x="2269.80" y="673.00" width="11.80" height="42.90" fill="#ff0000" />
<rect x="2293.90" y="673.00" width="13.00" height="42.90" fill="#ff0000" />
<rect x="2356.00" y="673.00" width="12.10" height="42.90" fill="#ff0000" />
<rect x="2442.40" y="673.00" width="12.00" height="42.90" fill="#ff0000" />
<rect x="2504.80" y="673.00" width="12.00" height="42.90" fill="#ff0000" />
<rect x="2540.90" y="673.00" width="25.30" height="42.90" fill="#ff0000" />
<rect x="2603.30" y="673.00" width="25.10" height="42.90" fill="#ff0000" />
<rect x="2738.90" y="673.00" width="13.10" height="42.90" fill="#ff0000" />
<rect x="2764.00" y="673.00" width="12.00" height="42.90" fill="#ff0000" />
<rect x="2813.10" y="673.00" width="12.10" height="42.90" fill="#ff0000" />
<rect x="2887.60" y="673.00" width="12.30" height="42.90" fill="#ff0000" />
<rect x="2912.70" y="673.00" width="12.30" height="42.90" fill="#ff0000" />
<rect x="2974.10" y="673.00" width="12.00" height="42.90" fill="#ff0000" />
<line x1="22.90" y1="716.40" x2="3010.70" y2="716.40" stroke="#777777" stroke-width="1.4" />
<line x1="45.00" y1="673.30" x2="45.00" y2="726.80" stroke="#707070" stroke-width="1.5" />
<line x1="3010.60" y1="716.40" x2="3010.60" y2="725.80" stroke="#777777" stroke-width="1.2" />
<line x1="82.60" y1="716.40" x2="82.60" y2="720.30" stroke="#777777" stroke-width="1.2" />
<text x="67.80" y="732.00" fill="#27622b" stroke="#27622b" stroke-width="0.1" font-size="15.3" textLength="66.46" lengthAdjust="spacingAndGlyphs">15:23:40</text>
<line x1="181.43" y1="716.40" x2="181.43" y2="720.30" stroke="#777777" stroke-width="1.2" />
<text x="166.63" y="732.00" fill="#27622b" stroke="#27622b" stroke-width="0.1" font-size="15.3" textLength="66.46" lengthAdjust="spacingAndGlyphs">15:24:00</text>
<line x1="280.26" y1="716.40" x2="280.26" y2="720.30" stroke="#777777" stroke-width="1.2" />
<text x="265.46" y="732.00" fill="#27622b" stroke="#27622b" stroke-width="0.1" font-size="15.3" textLength="66.46" lengthAdjust="spacingAndGlyphs">15:24:20</text>
<line x1="379.09" y1="716.40" x2="379.09" y2="720.30" stroke="#777777" stroke-width="1.2" />
<text x="364.29" y="732.00" fill="#27622b" stroke="#27622b" stroke-width="0.1" font-size="15.3" textLength="66.46" lengthAdjust="spacingAndGlyphs">15:24:40</text>
<line x1="477.92" y1="716.40" x2="477.92" y2="720.30" stroke="#777777" stroke-width="1.2" />
<text x="463.12" y="732.00" fill="#27622b" stroke="#27622b" stroke-width="0.1" font-size="15.3" textLength="66.46" lengthAdjust="spacingAndGlyphs">15:25:00</text>
<line x1="576.75" y1="716.40" x2="576.75" y2="720.30" stroke="#777777" stroke-width="1.2" />
<text x="561.95" y="732.00" fill="#27622b" stroke="#27622b" stroke-width="0.1" font-size="15.3" textLength="66.46" lengthAdjust="spacingAndGlyphs">15:25:20</text>
<line x1="675.58" y1="716.40" x2="675.58" y2="720.30" stroke="#777777" stroke-width="1.2" />
<text x="660.78" y="732.00" fill="#27622b" stroke="#27622b" stroke-width="0.1" font-size="15.3" textLength="66.46" lengthAdjust="spacingAndGlyphs">15:25:40</text>
<line x1="774.41" y1="716.40" x2="774.41" y2="720.30" stroke="#777777" stroke-width="1.2" />
<text x="759.61" y="732.00" fill="#27622b" stroke="#27622b" stroke-width="0.1" font-size="15.3" textLength="66.46" lengthAdjust="spacingAndGlyphs">15:26:00</text>
<line x1="873.24" y1="716.40" x2="873.24" y2="720.30" stroke="#777777" stroke-width="1.2" />
<text x="858.44" y="732.00" fill="#27622b" stroke="#27622b" stroke-width="0.1" font-size="15.3" textLength="66.46" lengthAdjust="spacingAndGlyphs">15:26:20</text>
<line x1="972.07" y1="716.40" x2="972.07" y2="720.30" stroke="#777777" stroke-width="1.2" />
<text x="957.27" y="732.00" fill="#27622b" stroke="#27622b" stroke-width="0.1" font-size="15.3" textLength="66.46" lengthAdjust="spacingAndGlyphs">15:26:40</text>
<line x1="1070.90" y1="716.40" x2="1070.90" y2="720.30" stroke="#777777" stroke-width="1.2" />
<text x="1056.10" y="732.00" fill="#27622b" stroke="#27622b" stroke-width="0.1" font-size="15.3" textLength="66.46" lengthAdjust="spacingAndGlyphs">15:27:00</text>
<line x1="1169.73" y1="716.40" x2="1169.73" y2="720.30" stroke="#777777" stroke-width="1.2" />
<text x="1154.93" y="732.00" fill="#27622b" stroke="#27622b" stroke-width="0.1" font-size="15.3" textLength="66.46" lengthAdjust="spacingAndGlyphs">15:27:20</text>
<line x1="1268.56" y1="716.40" x2="1268.56" y2="720.30" stroke="#777777" stroke-width="1.2" />
<text x="1253.76" y="732.00" fill="#27622b" stroke="#27622b" stroke-width="0.1" font-size="15.3" textLength="66.46" lengthAdjust="spacingAndGlyphs">15:27:40</text>
<line x1="1367.39" y1="716.40" x2="1367.39" y2="720.30" stroke="#777777" stroke-width="1.2" />
<text x="1352.59" y="732.00" fill="#27622b" stroke="#27622b" stroke-width="0.1" font-size="15.3" textLength="66.46" lengthAdjust="spacingAndGlyphs">15:28:00</text>
<line x1="1466.22" y1="716.40" x2="1466.22" y2="720.30" stroke="#777777" stroke-width="1.2" />
<text x="1451.42" y="732.00" fill="#27622b" stroke="#27622b" stroke-width="0.1" font-size="15.3" textLength="66.46" lengthAdjust="spacingAndGlyphs">15:28:20</text>
<line x1="1565.05" y1="716.40" x2="1565.05" y2="720.30" stroke="#777777" stroke-width="1.2" />
<text x="1550.25" y="732.00" fill="#27622b" stroke="#27622b" stroke-width="0.1" font-size="15.3" textLength="66.46" lengthAdjust="spacingAndGlyphs">15:28:40</text>
<line x1="1663.88" y1="716.40" x2="1663.88" y2="720.30" stroke="#777777" stroke-width="1.2" />
<text x="1649.08" y="732.00" fill="#27622b" stroke="#27622b" stroke-width="0.1" font-size="15.3" textLength="66.46" lengthAdjust="spacingAndGlyphs">15:29:00</text>
<line x1="1762.71" y1="716.40" x2="1762.71" y2="720.30" stroke="#777777" stroke-width="1.2" />
<text x="1747.91" y="732.00" fill="#27622b" stroke="#27622b" stroke-width="0.1" font-size="15.3" textLength="66.46" lengthAdjust="spacingAndGlyphs">15:29:20</text>
<line x1="1861.54" y1="716.40" x2="1861.54" y2="720.30" stroke="#777777" stroke-width="1.2" />
<text x="1846.74" y="732.00" fill="#27622b" stroke="#27622b" stroke-width="0.1" font-size="15.3" textLength="66.46" lengthAdjust="spacingAndGlyphs">15:29:40</text>
<line x1="1960.37" y1="716.40" x2="1960.37" y2="720.30" stroke="#777777" stroke-width="1.2" />
<text x="1945.57" y="732.00" fill="#27622b" stroke="#27622b" stroke-width="0.1" font-size="15.3" textLength="66.46" lengthAdjust="spacingAndGlyphs">15:30:00</text>
<line x1="2059.20" y1="716.40" x2="2059.20" y2="720.30" stroke="#777777" stroke-width="1.2" />
<text x="2044.40" y="732.00" fill="#27622b" stroke="#27622b" stroke-width="0.1" font-size="15.3" textLength="66.46" lengthAdjust="spacingAndGlyphs">15:30:20</text>
<line x1="2158.03" y1="716.40" x2="2158.03" y2="720.30" stroke="#777777" stroke-width="1.2" />
<text x="2143.23" y="732.00" fill="#27622b" stroke="#27622b" stroke-width="0.1" font-size="15.3" textLength="66.46" lengthAdjust="spacingAndGlyphs">15:30:40</text>
<line x1="2256.86" y1="716.40" x2="2256.86" y2="720.30" stroke="#777777" stroke-width="1.2" />
<text x="2242.06" y="732.00" fill="#27622b" stroke="#27622b" stroke-width="0.1" font-size="15.3" textLength="66.46" lengthAdjust="spacingAndGlyphs">15:31:00</text>
<line x1="2355.69" y1="716.40" x2="2355.69" y2="720.30" stroke="#777777" stroke-width="1.2" />
<text x="2340.89" y="732.00" fill="#27622b" stroke="#27622b" stroke-width="0.1" font-size="15.3" textLength="66.46" lengthAdjust="spacingAndGlyphs">15:31:20</text>
<line x1="2454.52" y1="716.40" x2="2454.52" y2="720.30" stroke="#777777" stroke-width="1.2" />
<text x="2439.72" y="732.00" fill="#27622b" stroke="#27622b" stroke-width="0.1" font-size="15.3" textLength="66.46" lengthAdjust="spacingAndGlyphs">15:31:40</text>
<line x1="2553.35" y1="716.40" x2="2553.35" y2="720.30" stroke="#777777" stroke-width="1.2" />
<text x="2538.55" y="732.00" fill="#27622b" stroke="#27622b" stroke-width="0.1" font-size="15.3" textLength="66.46" lengthAdjust="spacingAndGlyphs">15:32:00</text>
<line x1="2652.18" y1="716.40" x2="2652.18" y2="720.30" stroke="#777777" stroke-width="1.2" />
<text x="2637.38" y="732.00" fill="#27622b" stroke="#27622b" stroke-width="0.1" font-size="15.3" textLength="66.46" lengthAdjust="spacingAndGlyphs">15:32:20</text>
<line x1="2751.01" y1="716.40" x2="2751.01" y2="720.30" stroke="#777777" stroke-width="1.2" />
<text x="2736.21" y="732.00" fill="#27622b" stroke="#27622b" stroke-width="0.1" font-size="15.3" textLength="66.46" lengthAdjust="spacingAndGlyphs">15:32:40</text>
<line x1="2849.84" y1="716.40" x2="2849.84" y2="720.30" stroke="#777777" stroke-width="1.2" />
<text x="2835.04" y="732.00" fill="#27622b" stroke="#27622b" stroke-width="0.1" font-size="15.3" textLength="66.46" lengthAdjust="spacingAndGlyphs">15:33:00</text>
<line x1="2948.67" y1="716.40" x2="2948.67" y2="720.30" stroke="#777777" stroke-width="1.2" />
<text x="2933.87" y="732.00" fill="#27622b" stroke="#27622b" stroke-width="0.1" font-size="15.3" textLength="66.46" lengthAdjust="spacingAndGlyphs">15:33:20</text>
<line x1="0.00" y1="737.50" x2="3040.00" y2="737.50" stroke="#c6c6c6" stroke-width="1.3" />
<text x="3.00" y="755.00" fill="#3a3a3a" stroke="#3a3a3a" font-size="15.3" textLength="356.04" lengthAdjust="spacingAndGlyphs">login1.worldofwarships.jp (92.223.16.187) hop 7</text>
<text x="2786.50" y="755.00" fill="#3a3a3a" stroke="#3a3a3a" font-size="15.3" textLength="250.09" lengthAdjust="spacingAndGlyphs">10 minutes (15:23:32 - 15:33:32)</text>
<rect x="45.60" y="757.00" width="2964.50" height="13.30" fill="#fed0cd" />
<rect x="45.60" y="770.30" width="2964.50" height="15.00" fill="#feeacd" />
<rect x="45.60" y="785.30" width="2964.50" height="14.40" fill="#e0efd5" />
<rect x="45.80" y="757.00" width="8.60" height="13.30" fill="#d8c6c5" />
<rect x="45.80" y="770.30" width="8.60" height="15.00" fill="#c9c5c2" />
<rect x="45.80" y="785.30" width="8.60" height="14.40" fill="#c4c8c2" />
<text x="15.20" y="773.00" fill="#444444" stroke="#444444" font-size="15.3" textLength="25.98" lengthAdjust="spacingAndGlyphs">290</text>
<text x="33.20" y="798.00" fill="#444444" stroke="#444444" font-size="15.3" textLength="8.02" lengthAdjust="spacingAndGlyphs">0</text>
<text x="3013.60" y="773.00" fill="#cc1414" stroke="#cc1414" font-size="15.3" textLength="16.43" lengthAdjust="spacingAndGlyphs">30</text>
<polyline points="57.0,762.8 69.3,762.8 69.3,762.1 81.7,762.1 81.7,762.8 118.7,762.8 118.7,762.5 131.1,762.5 131.1,763.5 143.4,763.5 143.4,762.8 168.1,762.8 168.1,762.1 217.5,762.1 217.5,762.8 242.2,762.8 242.2,763.5 254.6,763.5 254.6,762.8 266.9,762.8 266.9,763.5 279.3,763.5 279.3,762.8 353.4,762.8 353.4,763.5 365.8,763.5 365.8,761.4 378.1,761.4 378.1,762.8 538.7,762.8 538.7,762.5 575.7,762.5 575.7,762.1 625.1,762.1 625.1,762.8 736.3,762.8 736.3,762.1 785.7,762.1 785.7,762.8 822.7,762.8 822.7,762.5 835.1,762.5 835.1,763.2 847.4,763.2 847.4,763.5 859.8,763.5 859.8,762.5 872.1,762.5 872.1,762.8 896.8,762.8 896.8,762.5 958.6,762.5 958.6,762.8 1020.3,762.8 1020.3,762.5 1045.0,762.5 1045.0,762.8 1082.1,762.8 1082.1,762.1 1094.4,762.1 1094.4,762.8 1180.9,762.8 1180.9,764.3 1205.5,764.3 1205.5,762.8 1230.2,762.8 1230.2,762.1 1242.6,762.1 1242.6,763.2 1254.9,763.2 1254.9,762.8 1329.0,762.8 1329.0,762.1 1341.4,762.1 1341.4,762.8 1403.1,762.8 1403.1,762.5 1415.5,762.5 1415.5,762.8 1440.2,762.8 1440.2,762.1 1464.9,762.1 1464.9,762.8 1563.7,762.8 1563.7,763.5 1600.7,763.5 1600.7,762.8 1637.8,762.8 1637.8,763.5 1687.2,763.5 1687.2,762.8 1711.9,762.8 1711.9,763.2 1724.2,763.2 1724.2,762.8 1810.7,762.8 1810.7,762.5 1872.4,762.5 1872.4,762.8 1909.5,762.8 1909.5,762.1 1958.9,762.1 1958.9,762.8 1971.2,762.8 1971.2,764.3 1983.6,764.3 1983.6,762.8 2070.0,762.8 2070.0,762.5 2082.4,762.5 2082.4,762.1 2094.7,762.1 2094.7,764.3 2131.8,764.3 2131.8,762.8 2156.5,762.8 2156.5,763.5 2205.9,763.5 2205.9,762.8 2242.9,762.8 2242.9,763.2 2255.3,763.2 2255.3,762.8 2304.7,762.8 2304.7,762.1 2465.2,762.1 2465.2,762.5 2489.9,762.5 2489.9,763.2 2527.0,763.2 2527.0,762.8 2564.0,762.8 2564.0,762.5 2576.4,762.5 2576.4,763.5 2588.7,763.5 2588.7,762.8 2601.1,762.8 2601.1,763.2 2613.4,763.2 2613.4,762.8 2650.5,762.8 2650.5,763.2 2699.9,763.2 2699.9,762.8 2736.9,762.8 2736.9,762.5 2749.3,762.5 2749.3,762.8 2811.0,762.8 2811.0,763.2 2835.7,763.2 2835.7,761.4 2860.4,761.4 2860.4,762.5 2872.8,762.5 2872.8,763.2 2897.5,763.2 2897.5,762.1 2922.2,762.1 2922.2,762.8 2959.2,762.8 2959.2,763.2 2971.6,763.2 2971.6,762.8 3010.0,762.8" fill="none" stroke="#111111" stroke-width="2.3"/>
<rect x="143.10" y="757.00" width="12.30" height="42.90" fill="#ff0000" />
<rect x="255.00" y="757.00" width="24.00" height="42.90" fill="#ff0000" />
<rect x="402.60" y="757.00" width="25.10" height="42.90" fill="#ff0000" />
<rect x="502.10" y="757.00" width="24.10" height="42.90" fill="#ff0000" />
<rect x="612.70" y="757.00" width="13.00" height="42.90" fill="#ff0000" />
<rect x="649.90" y="757.00" width="25.10" height="42.90" fill="#ff0000" />
<rect x="699.00" y="757.00" width="13.10" height="42.90" fill="#ff0000" />
<rect x="822.60" y="757.00" width="25.30" height="42.90" fill="#ff0000" />
<rect x="959.20" y="757.00" width="12.10" height="42.90" fill="#ff0000" />
<rect x="983.30" y="757.00" width="13.30" height="42.90" fill="#ff0000" />
<rect x="1057.80" y="757.00" width="12.00" height="42.90" fill="#ff0000" />
<rect x="1157.00" y="757.00" width="12.10" height="42.90" fill="#ff0000" />
<rect x="1181.30" y="757.00" width="12.10" height="42.90" fill="#ff0000" />
<rect x="1206.40" y="757.00" width="24.10" height="42.90" fill="#ff0000" />
<rect x="1330.10" y="757.00" width="24.10" height="42.90" fill="#ff0000" />
<rect x="1367.50" y="757.00" width="12.00" height="42.90" fill="#ff0000" />
<rect x="1391.30" y="757.00" width="25.00" height="42.90" fill="#ff0000" />
<rect x="1503.10" y="757.00" width="11.80" height="42.90" fill="#ff0000" />
<rect x="1762.30" y="757.00" width="12.50" height="42.90" fill="#ff0000" />
<rect x="1812.70" y="757.00" width="24.10" height="42.90" fill="#ff0000" />
<rect x="1873.70" y="757.00" width="12.00" height="42.90" fill="#ff0000" />
<rect x="1899.00" y="757.00" width="11.80" height="42.90" fill="#ff0000" />
<rect x="1948.20" y="757.00" width="12.00" height="42.90" fill="#ff0000" />
<rect x="2046.40" y="757.00" width="13.60" height="42.90" fill="#ff0000" />
<rect x="2083.80" y="757.00" width="13.30" height="42.90" fill="#ff0000" />
<rect x="2146.00" y="757.00" width="24.30" height="42.90" fill="#ff0000" />
<rect x="2183.30" y="757.00" width="12.00" height="42.90" fill="#ff0000" />
<rect x="2207.40" y="757.00" width="13.00" height="42.90" fill="#ff0000" />
<rect x="2244.50" y="757.00" width="12.00" height="42.90" fill="#ff0000" />
<rect x="2269.80" y="757.00" width="11.80" height="42.90" fill="#ff0000" />
<rect x="2356.00" y="757.00" width="12.10" height="42.90" fill="#ff0000" />
<rect x="2430.30" y="757.00" width="12.10" height="42.90" fill="#ff0000" />
<rect x="2516.80" y="757.00" width="12.10" height="42.90" fill="#ff0000" />
<rect x="2603.30" y="757.00" width="12.10" height="42.90" fill="#ff0000" />
<rect x="2628.40" y="757.00" width="12.00" height="42.90" fill="#ff0000" />
<rect x="2689.80" y="757.00" width="12.00" height="42.90" fill="#ff0000" />
<rect x="2764.00" y="757.00" width="12.00" height="42.90" fill="#ff0000" />
<rect x="2801.40" y="757.00" width="23.80" height="42.90" fill="#ff0000" />
<rect x="2838.50" y="757.00" width="12.00" height="42.90" fill="#ff0000" />
<rect x="2875.60" y="757.00" width="12.00" height="42.90" fill="#ff0000" />
<rect x="2899.90" y="757.00" width="12.80" height="42.90" fill="#ff0000" />
<rect x="2937.00" y="757.00" width="25.10" height="42.90" fill="#ff0000" />
<rect x="2974.10" y="757.00" width="35.80" height="42.90" fill="#ff0000" />
<line x1="22.90" y1="800.40" x2="3010.70" y2="800.40" stroke="#777777" stroke-width="1.4" />
<line x1="45.00" y1="757.30" x2="45.00" y2="810.80" stroke="#707070" stroke-width="1.5" />
<line x1="3010.60" y1="800.40" x2="3010.60" y2="809.80" stroke="#777777" stroke-width="1.2" />
<line x1="82.60" y1="800.40" x2="82.60" y2="804.30" stroke="#777777" stroke-width="1.2" />
<text x="67.80" y="816.00" fill="#27622b" stroke="#27622b" stroke-width="0.1" font-size="15.3" textLength="66.46" lengthAdjust="spacingAndGlyphs">15:23:40</text>
<line x1="181.43" y1="800.40" x2="181.43" y2="804.30" stroke="#777777" stroke-width="1.2" />
<text x="166.63" y="816.00" fill="#27622b" stroke="#27622b" stroke-width="0.1" font-size="15.3" textLength="66.46" lengthAdjust="spacingAndGlyphs">15:24:00</text>
<line x1="280.26" y1="800.40" x2="280.26" y2="804.30" stroke="#777777" stroke-width="1.2" />
<text x="265.46" y="816.00" fill="#27622b" stroke="#27622b" stroke-width="0.1" font-size="15.3" textLength="66.46" lengthAdjust="spacingAndGlyphs">15:24:20</text>
<line x1="379.09" y1="800.40" x2="379.09" y2="804.30" stroke="#777777" stroke-width="1.2" />
<text x="364.29" y="816.00" fill="#27622b" stroke="#27622b" stroke-width="0.1" font-size="15.3" textLength="66.46" lengthAdjust="spacingAndGlyphs">15:24:40</text>
<line x1="477.92" y1="800.40" x2="477.92" y2="804.30" stroke="#777777" stroke-width="1.2" />
<text x="463.12" y="816.00" fill="#27622b" stroke="#27622b" stroke-width="0.1" font-size="15.3" textLength="66.46" lengthAdjust="spacingAndGlyphs">15:25:00</text>
<line x1="576.75" y1="800.40" x2="576.75" y2="804.30" stroke="#777777" stroke-width="1.2" />
<text x="561.95" y="816.00" fill="#27622b" stroke="#27622b" stroke-width="0.1" font-size="15.3" textLength="66.46" lengthAdjust="spacingAndGlyphs">15:25:20</text>
<line x1="675.58" y1="800.40" x2="675.58" y2="804.30" stroke="#777777" stroke-width="1.2" />
<text x="660.78" y="816.00" fill="#27622b" stroke="#27622b" stroke-width="0.1" font-size="15.3" textLength="66.46" lengthAdjust="spacingAndGlyphs">15:25:40</text>
<line x1="774.41" y1="800.40" x2="774.41" y2="804.30" stroke="#777777" stroke-width="1.2" />
<text x="759.61" y="816.00" fill="#27622b" stroke="#27622b" stroke-width="0.1" font-size="15.3" textLength="66.46" lengthAdjust="spacingAndGlyphs">15:26:00</text>
<line x1="873.24" y1="800.40" x2="873.24" y2="804.30" stroke="#777777" stroke-width="1.2" />
<text x="858.44" y="816.00" fill="#27622b" stroke="#27622b" stroke-width="0.1" font-size="15.3" textLength="66.46" lengthAdjust="spacingAndGlyphs">15:26:20</text>
<line x1="972.07" y1="800.40" x2="972.07" y2="804.30" stroke="#777777" stroke-width="1.2" />
<text x="957.27" y="816.00" fill="#27622b" stroke="#27622b" stroke-width="0.1" font-size="15.3" textLength="66.46" lengthAdjust="spacingAndGlyphs">15:26:40</text>
<line x1="1070.90" y1="800.40" x2="1070.90" y2="804.30" stroke="#777777" stroke-width="1.2" />
<text x="1056.10" y="816.00" fill="#27622b" stroke="#27622b" stroke-width="0.1" font-size="15.3" textLength="66.46" lengthAdjust="spacingAndGlyphs">15:27:00</text>
<line x1="1169.73" y1="800.40" x2="1169.73" y2="804.30" stroke="#777777" stroke-width="1.2" />
<text x="1154.93" y="816.00" fill="#27622b" stroke="#27622b" stroke-width="0.1" font-size="15.3" textLength="66.46" lengthAdjust="spacingAndGlyphs">15:27:20</text>
<line x1="1268.56" y1="800.40" x2="1268.56" y2="804.30" stroke="#777777" stroke-width="1.2" />
<text x="1253.76" y="816.00" fill="#27622b" stroke="#27622b" stroke-width="0.1" font-size="15.3" textLength="66.46" lengthAdjust="spacingAndGlyphs">15:27:40</text>
<line x1="1367.39" y1="800.40" x2="1367.39" y2="804.30" stroke="#777777" stroke-width="1.2" />
<text x="1352.59" y="816.00" fill="#27622b" stroke="#27622b" stroke-width="0.1" font-size="15.3" textLength="66.46" lengthAdjust="spacingAndGlyphs">15:28:00</text>
<line x1="1466.22" y1="800.40" x2="1466.22" y2="804.30" stroke="#777777" stroke-width="1.2" />
<text x="1451.42" y="816.00" fill="#27622b" stroke="#27622b" stroke-width="0.1" font-size="15.3" textLength="66.46" lengthAdjust="spacingAndGlyphs">15:28:20</text>
<line x1="1565.05" y1="800.40" x2="1565.05" y2="804.30" stroke="#777777" stroke-width="1.2" />
<text x="1550.25" y="816.00" fill="#27622b" stroke="#27622b" stroke-width="0.1" font-size="15.3" textLength="66.46" lengthAdjust="spacingAndGlyphs">15:28:40</text>
<line x1="1663.88" y1="800.40" x2="1663.88" y2="804.30" stroke="#777777" stroke-width="1.2" />
<text x="1649.08" y="816.00" fill="#27622b" stroke="#27622b" stroke-width="0.1" font-size="15.3" textLength="66.46" lengthAdjust="spacingAndGlyphs">15:29:00</text>
<line x1="1762.71" y1="800.40" x2="1762.71" y2="804.30" stroke="#777777" stroke-width="1.2" />
<text x="1747.91" y="816.00" fill="#27622b" stroke="#27622b" stroke-width="0.1" font-size="15.3" textLength="66.46" lengthAdjust="spacingAndGlyphs">15:29:20</text>
<line x1="1861.54" y1="800.40" x2="1861.54" y2="804.30" stroke="#777777" stroke-width="1.2" />
<text x="1846.74" y="816.00" fill="#27622b" stroke="#27622b" stroke-width="0.1" font-size="15.3" textLength="66.46" lengthAdjust="spacingAndGlyphs">15:29:40</text>
<line x1="1960.37" y1="800.40" x2="1960.37" y2="804.30" stroke="#777777" stroke-width="1.2" />
<text x="1945.57" y="816.00" fill="#27622b" stroke="#27622b" stroke-width="0.1" font-size="15.3" textLength="66.46" lengthAdjust="spacingAndGlyphs">15:30:00</text>
<line x1="2059.20" y1="800.40" x2="2059.20" y2="804.30" stroke="#777777" stroke-width="1.2" />
<text x="2044.40" y="816.00" fill="#27622b" stroke="#27622b" stroke-width="0.1" font-size="15.3" textLength="66.46" lengthAdjust="spacingAndGlyphs">15:30:20</text>
<line x1="2158.03" y1="800.40" x2="2158.03" y2="804.30" stroke="#777777" stroke-width="1.2" />
<text x="2143.23" y="816.00" fill="#27622b" stroke="#27622b" stroke-width="0.1" font-size="15.3" textLength="66.46" lengthAdjust="spacingAndGlyphs">15:30:40</text>
<line x1="2256.86" y1="800.40" x2="2256.86" y2="804.30" stroke="#777777" stroke-width="1.2" />
<text x="2242.06" y="816.00" fill="#27622b" stroke="#27622b" stroke-width="0.1" font-size="15.3" textLength="66.46" lengthAdjust="spacingAndGlyphs">15:31:00</text>
<line x1="2355.69" y1="800.40" x2="2355.69" y2="804.30" stroke="#777777" stroke-width="1.2" />
<text x="2340.89" y="816.00" fill="#27622b" stroke="#27622b" stroke-width="0.1" font-size="15.3" textLength="66.46" lengthAdjust="spacingAndGlyphs">15:31:20</text>
<line x1="2454.52" y1="800.40" x2="2454.52" y2="804.30" stroke="#777777" stroke-width="1.2" />
<text x="2439.72" y="816.00" fill="#27622b" stroke="#27622b" stroke-width="0.1" font-size="15.3" textLength="66.46" lengthAdjust="spacingAndGlyphs">15:31:40</text>
<line x1="2553.35" y1="800.40" x2="2553.35" y2="804.30" stroke="#777777" stroke-width="1.2" />
<text x="2538.55" y="816.00" fill="#27622b" stroke="#27622b" stroke-width="0.1" font-size="15.3" textLength="66.46" lengthAdjust="spacingAndGlyphs">15:32:00</text>
<line x1="2652.18" y1="800.40" x2="2652.18" y2="804.30" stroke="#777777" stroke-width="1.2" />
<text x="2637.38" y="816.00" fill="#27622b" stroke="#27622b" stroke-width="0.1" font-size="15.3" textLength="66.46" lengthAdjust="spacingAndGlyphs">15:32:20</text>
<line x1="2751.01" y1="800.40" x2="2751.01" y2="804.30" stroke="#777777" stroke-width="1.2" />
<text x="2736.21" y="816.00" fill="#27622b" stroke="#27622b" stroke-width="0.1" font-size="15.3" textLength="66.46" lengthAdjust="spacingAndGlyphs">15:32:40</text>
<line x1="2849.84" y1="800.40" x2="2849.84" y2="804.30" stroke="#777777" stroke-width="1.2" />
<text x="2835.04" y="816.00" fill="#27622b" stroke="#27622b" stroke-width="0.1" font-size="15.3" textLength="66.46" lengthAdjust="spacingAndGlyphs">15:33:00</text>
<line x1="2948.67" y1="800.40" x2="2948.67" y2="804.30" stroke="#777777" stroke-width="1.2" />
<text x="2933.87" y="816.00" fill="#27622b" stroke="#27622b" stroke-width="0.1" font-size="15.3" textLength="66.46" lengthAdjust="spacingAndGlyphs">15:33:20</text>
<line x1="0.00" y1="821.50" x2="3040.00" y2="821.50" stroke="#c6c6c6" stroke-width="1.3" />
<text x="1222.70" y="841.00" fill="#1c1c1c" stroke="#1c1c1c" font-size="15.3" textLength="594.74" lengthAdjust="spacingAndGlyphs">Image generated by PingPlotter Windows 5.24.3.8913 Standard (pingplotter.com)</text>
</svg>
</body></html>
